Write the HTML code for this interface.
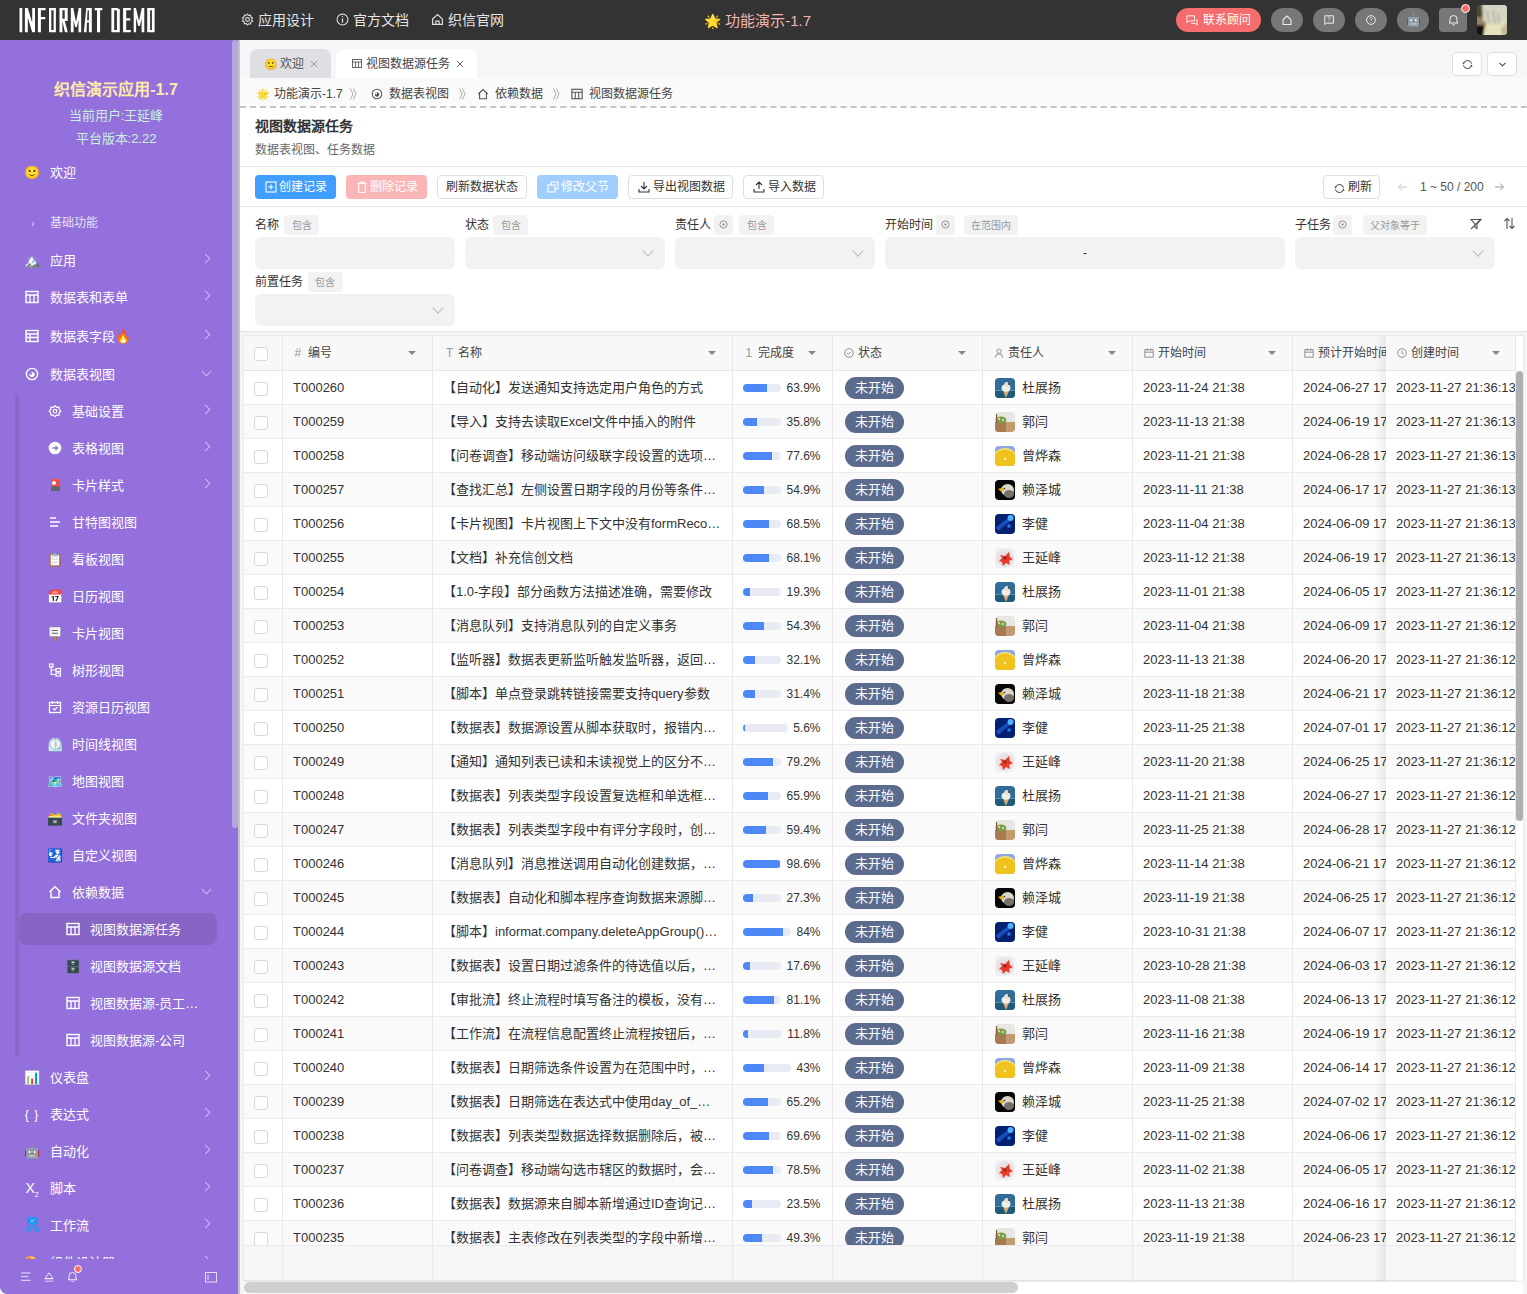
<!DOCTYPE html>
<html lang="zh-CN"><head><meta charset="utf-8"><title>视图数据源任务</title>
<style>
*{box-sizing:border-box}
html,body{margin:0;padding:0;width:1527px;height:1294px;overflow:hidden;background:#f5f5f5;font-family:"Liberation Sans",sans-serif;color:#333}
.abs{position:absolute}
#hdr{position:absolute;left:0;top:0;width:1527px;height:40px;background:#333}
#side{position:absolute;left:0;top:40px;width:238px;height:1254px;background:#9370db;border-bottom-left-radius:8px;overflow:hidden}
#main{position:absolute;left:240px;top:40px;width:1287px;height:1254px;background:#f5f5f5}
.mi{position:absolute;left:0;width:232px;height:37px;color:#fff;font-size:13px}
.mi .ic{position:absolute;top:0;height:37px;line-height:37px;font-size:13px;text-align:center;width:16px}
.mi .tx{position:absolute;top:0;line-height:37px;white-space:nowrap}
.mi .ar{position:absolute;left:202px;top:13px;width:7px;height:7px;border-right:1.3px solid rgba(255,255,255,.55);border-top:1.3px solid rgba(255,255,255,.55);transform:rotate(45deg)}
.mi .ad{position:absolute;left:203px;top:12px;width:7px;height:7px;border-right:1.3px solid rgba(255,255,255,.55);border-bottom:1.3px solid rgba(255,255,255,.55);transform:rotate(45deg)}
.btn{position:absolute;top:175px;height:24px;border-radius:4px;font-size:12px;line-height:22px;white-space:nowrap}
.btn.o{border:1px solid #dcdfe6;background:#fff;color:#333}
.tag{position:absolute;height:19px;background:#f2f2f2;border-radius:4px;font-size:10px;color:#999;line-height:19px;text-align:center}
.lbl{position:absolute;font-size:12px;color:#333;line-height:19px}
.inp{position:absolute;height:32px;background:#f2f2f2;border-radius:6px}
.chev{position:absolute;width:8px;height:8px;border-right:1px solid #bbb;border-bottom:1px solid #bbb;transform:rotate(45deg)}
table{border-collapse:collapse}
.cell{position:absolute;height:34px;line-height:34px;font-size:13px;color:#333;white-space:nowrap;overflow:hidden}
</style></head><body>

<div id="hdr">
<svg class="abs" style="left:0;top:0" width="160" height="40"><path d="M19.5 8H22.3V32.2H19.5Z M24.9 8H27.8V32.2H24.9Z M32.2 8H35.0V32.2H32.2Z M24.9 8 L27.8 8 L35.0 32.2 L32.2 32.2Z M37.9 8H40.9V32.2H37.9Z M37.9 8H45.6V10.3H37.9Z M37.9 17H45.3V19.2H37.9Z M49.0 8H55.9V10.3H49.0Z M49.0 29.900000000000002H55.9V32.2H49.0Z M49.0 8H51.3V32.2H49.0Z M53.6 8H55.9V32.2H53.6Z M59.5 8H62.4V32.2H59.5Z M59.5 8H67.7V10.3H59.5Z M64.7 8H67.7V21H64.7Z M59.5 18.8H67.7V21H59.5Z M62.4 21 L64.8 21 L67.8 32.2 L64.9 32.2Z M70.8 8H73.6V32.2H70.8Z M78.5 8H81.2V32.2H78.5Z M70.8 8 L73.2 8 L76.0 22 L78.8 8 L81.2 8 L76.8 27 L75.2 27Z M83.8 32.2 L86.3 8 L91.8 8 L91.8 32.2 L88.9 32.2 L88.9 10.3 L87.6 10.3 L86.5 32.2Z M86.2 20.3H89V22.6H86.2Z M94.7 8H102.3V10.3H94.7Z M97.0 8H100.1V32.2H97.0Z M111.4 8H114.2V32.2H111.4Z M111.4 8H118.0V10.3H111.4Z M111.4 29.900000000000002H119.8V32.2H111.4Z M116.9 9H119.8V32.2H116.9Z M116.0 8 L118.0 8 L119.8 11 L116.9 11Z M123.1 8H126.2V32.2H123.1Z M123.1 8H130.8V10.3H123.1Z M123.1 18.2H130.3V20.5H123.1Z M123.1 29.900000000000002H130.8V32.2H123.1Z M133.7 8H136.1V32.2H133.7Z M141.6 8H144.3V32.2H141.6Z M133.7 8 L136.0 8 L139.0 21 L141.8 8 L144.3 8 L139.8 26 L138.2 26Z M147.2 8H154.6V10.3H147.2Z M147.2 29.900000000000002H154.6V32.2H147.2Z M147.2 8H150.1V32.2H147.2Z M151.9 8H154.6V32.2H151.9Z" fill="#fff"/></svg>
<div class="abs" style="left:241px;top:0;height:40px;line-height:40px;color:#e6e6e6;font-size:14px;white-space:nowrap">
<svg width="13" height="13" viewBox="0 0 24 24" style="vertical-align:-1px"><path d="M12 2l2.2 2.6 3.4-.5.6 3.4 3 1.7-1.6 3 1.6 3-3 1.7-.6 3.4-3.4-.5L12 22l-2.2-2.6-3.4.5-.6-3.4-3-1.7 1.6-3-1.6-3 3-1.7.6-3.4 3.4.5z" fill="none" stroke="#ddd" stroke-width="2"/><circle cx="12" cy="12" r="3.5" fill="none" stroke="#ddd" stroke-width="2"/></svg> 应用设计</div>
<div class="abs" style="left:336px;top:0;height:40px;line-height:40px;color:#e6e6e6;font-size:14px;white-space:nowrap">
<svg width="13" height="13" viewBox="0 0 24 24" style="vertical-align:-1px"><circle cx="12" cy="12" r="10" fill="none" stroke="#ddd" stroke-width="2"/><path d="M12 10v8M12 6v2" stroke="#ddd" stroke-width="2.4"/></svg> 官方文档</div>
<div class="abs" style="left:431px;top:0;height:40px;line-height:40px;color:#e6e6e6;font-size:14px;white-space:nowrap">
<svg width="13" height="13" viewBox="0 0 24 24" style="vertical-align:-1px"><path d="M3 11L12 3l9 8v10H3z" fill="none" stroke="#ddd" stroke-width="2.2"/><path d="M9 21v-6h6v6" fill="none" stroke="#ddd" stroke-width="2"/></svg> 织信官网</div>
<div class="abs" style="left:704px;top:1px;height:40px;line-height:40px;color:#f4b4b4;font-size:15px;white-space:nowrap"><span style="font-size:14px">🌟</span> 功能演示-1.7</div>
<div class="abs" style="left:1176px;top:8px;width:85px;height:24px;border-radius:12px;background:#f56c6c;color:#fff;font-size:13px;line-height:24px;white-space:nowrap">
<svg class="abs" style="left:10px;top:7px" width="12" height="11" viewBox="0 0 14 13"><path d="M1 1h9v6H4L1 9z" fill="none" stroke="#fff" stroke-width="1.1"/><path d="M6 10h5l2 2V5" fill="none" stroke="#fff" stroke-width="1.1"/></svg>
<span class="abs" style="left:27px;top:0;font-size:12px">联系顾问</span></div>

<div class="abs" style="left:1271px;top:8px;width:32px;height:24px;border-radius:12px;background:#777"><svg class="abs" style="left:11px;top:6.5px" width="10" height="10" viewBox="0 0 10 10"><path d="M1 4.8L5 1l4 3.8V9.5H1z" fill="none" stroke="#eee" stroke-width="1.1" stroke-linejoin="round"/></svg></div>
<div class="abs" style="left:1313px;top:8px;width:32px;height:24px;border-radius:12px;background:#777"><svg class="abs" style="left:11px;top:6.5px" width="10" height="10" viewBox="0 0 10 10"><path d="M0.8 0.8h8.6v7.4H2.4L0.8 9.6z" fill="none" stroke="#eee" stroke-width="1"/><path d="M3.8 3.2a1.2 1.2 0 112 .9c-.6.4-.8.6-.8 1.2M5 6.3v.8" fill="none" stroke="#ddd" stroke-width=".9"/></svg></div>
<div class="abs" style="left:1355px;top:8px;width:32px;height:24px;border-radius:12px;background:#777"><svg class="abs" style="left:11px;top:6.5px" width="10" height="10" viewBox="0 0 10 10"><circle cx="5" cy="5" r="4.4" fill="none" stroke="#eee" stroke-width="1"/><path d="M3.8 3.7a1.2 1.2 0 112 .9c-.6.4-.8.6-.8 1.2M5 6.8v.8" fill="none" stroke="#ddd" stroke-width=".9"/></svg></div>
<div class="abs" style="left:1397px;top:8px;width:32px;height:24px;border-radius:12px;background:#777;text-align:center;line-height:24px;font-size:12px">🤖</div>
<div class="abs" style="left:1439px;top:8px;width:28px;height:24px;border-radius:4px;background:#777"><svg class="abs" style="left:9px;top:6px" width="11" height="12" viewBox="0 0 11 12"><path d="M2 8V5a3.5 3.5 0 017 0v3l1 1H1z" fill="none" stroke="#eee" stroke-width="1"/><path d="M4.3 10.8h2.4" stroke="#eee" stroke-width="1"/></svg></div>
<div class="abs" style="left:1461px;top:4px;width:9px;height:9px;border-radius:50%;background:#f56c6c;border:1px solid #fff"></div>
<svg class="abs" style="left:1477px;top:5px" width="30" height="30" viewBox="0 0 30 30"><defs><clipPath id="avc"><rect width="30" height="30" rx="3.5"/></clipPath><filter id="avb"><feGaussianBlur stdDeviation="1"/></filter></defs><g clip-path="url(#avc)"><rect width="30" height="30" fill="#8a7a58"/><g filter="url(#avb)"><rect x="-2" y="-2" width="8" height="14" fill="#4a4a30"/><rect x="-2" y="12" width="8" height="9" fill="#9a8060"/><rect x="-2" y="20" width="9" height="12" fill="#12100a"/><path d="M5 -2H33V14L22 22 12 20 6 16z" fill="#d6d4c4"/><path d="M9 18L22 20 28 14 32 18V32H6z" fill="#e6e2bc"/><path d="M24 24L32 14V32H26z" fill="#c8b89c"/><path d="M10 6L12 18M16 5L18 19M21 8L22 18" stroke="#9a9c80" stroke-width="1"/></g></g></svg>
</div>

<div id="side">
<div class="abs" style="left:0;top:39px;width:232px;text-align:center;color:#ffeaa7;font-size:16px;font-weight:bold;line-height:22px">织信演示应用-1.7</div>
<div class="abs" style="left:0;top:65px;width:232px;text-align:center;color:#c9f0dc;font-size:13px;line-height:22px">当前用户:王延峰</div>
<div class="abs" style="left:0;top:88px;width:232px;text-align:center;color:#c9f0dc;font-size:13px;line-height:22px">平台版本:2.22</div>

<div class="mi" style="top:114px"><div class="ic" style="left:24px"><span style="font-size:13px">🙂</span></div><div class="tx" style="left:50px">欢迎</div></div>
<div class="mi" style="top:165px"><div class="abs" style="left:31px;top:0;line-height:37px;font-size:11px;color:rgba(255,255,255,.75)">›</div><div class="tx" style="left:50px;color:rgba(255,255,255,.8);font-size:12px">基础功能</div></div>
<div class="mi" style="top:202px"><div class="ic" style="left:24px"><span style="font-size:13px">🏔️</span></div><div class="tx" style="left:50px">应用</div><div class="ar"></div></div>
<div class="mi" style="top:239px"><div class="ic" style="left:24px"><svg width="14" height="14" viewBox="0 0 14 14" style="vertical-align:middle;margin-top:-2px;position:relative;top:-1px"><rect x="1" y="1.5" width="12" height="11" fill="none" stroke="#fff" stroke-width="1.4"/><path d="M1 5h12M5 5v7.5M9 5v7.5" stroke="#fff" stroke-width="1.3"/></svg></div><div class="tx" style="left:50px">数据表和表单</div><div class="ar"></div></div>
<div class="mi" style="top:278px"><div class="ic" style="left:24px"><svg width="14" height="14" viewBox="0 0 14 14" style="vertical-align:middle;margin-top:-2px;position:relative;top:-1px"><rect x="1" y="1.5" width="12" height="11" fill="none" stroke="#fff" stroke-width="1.4"/><path d="M1 5h12M1 8.5h12M5 5v7.5" stroke="#fff" stroke-width="1.3"/></svg></div><div class="tx" style="left:50px">数据表字段<span style="font-size:13px">🔥</span></div><div class="ar"></div></div>
<div class="mi" style="top:316px"><div class="ic" style="left:24px"><svg width="14" height="14" viewBox="0 0 14 14" style="vertical-align:middle;margin-top:-2px;position:relative;top:-1px"><circle cx="7" cy="7" r="5.6" fill="none" stroke="#fff" stroke-width="1.4"/><circle cx="7" cy="7.6" r="2.6" fill="#fff"/><circle cx="6" cy="6.4" r="1.2" fill="#9370db"/></svg></div><div class="tx" style="left:50px">数据表视图</div><div class="ad"></div></div>
<div class="abs" style="left:15px;top:355px;width:4px;height:661px;background:#8a66c8"></div>
<div class="mi" style="top:353px"><div class="ic" style="left:47px"><svg width="14" height="14" viewBox="0 0 14 14" style="vertical-align:middle;margin-top:-2px;position:relative;top:-1px"><path d="M7 0.8l1.7 1.6 2.3-.2.2 2.3 1.6 1.7-1.6 1.7-.2 2.3-2.3-.2L7 11.6 5.3 10l-2.3.2-.2-2.3L1.2 6.2l1.6-1.7.2-2.3 2.3.2z" transform="translate(0,1)" fill="none" stroke="#fff" stroke-width="1.2"/><circle cx="7" cy="7.2" r="1.8" fill="none" stroke="#fff" stroke-width="1.2"/></svg></div><div class="tx" style="left:72px">基础设置</div><div class="ar"></div></div>
<div class="mi" style="top:390px"><div class="ic" style="left:47px"><svg width="14" height="14" viewBox="0 0 14 14" style="vertical-align:middle;margin-top:-2px;position:relative;top:-1px"><circle cx="7" cy="7" r="6.3" fill="#fff"/><path d="M4.5 7h5M7.5 5l2 2-2 2" fill="none" stroke="#9370db" stroke-width="1.3"/></svg></div><div class="tx" style="left:72px">表格视图</div><div class="ar"></div></div>
<div class="mi" style="top:427px"><div class="ic" style="left:47px"><svg width="14" height="14" viewBox="0 0 14 14" style="vertical-align:middle;margin-top:-2px;position:relative;top:-1px"><rect x="3" y="1" width="9" height="12" fill="#ef4f45"/><path d="M3 9.5q4.5-3 9 0V13H3z" fill="#5e6670"/><circle cx="6" cy="5" r="2" fill="#fff"/></svg></div><div class="tx" style="left:72px">卡片样式</div><div class="ar"></div></div>
<div class="mi" style="top:464px"><div class="ic" style="left:47px"><svg width="14" height="14" viewBox="0 0 14 14" style="vertical-align:middle;margin-top:-2px;position:relative;top:-1px"><path d="M2 3h6M2 7h10M2 11h8" stroke="#fff" stroke-width="1.4"/></svg></div><div class="tx" style="left:72px">甘特图视图</div></div>
<div class="mi" style="top:501px"><div class="ic" style="left:47px"><span style="font-size:13px">📋</span></div><div class="tx" style="left:72px">看板视图</div></div>
<div class="mi" style="top:538px"><div class="ic" style="left:47px"><span style="font-size:13px">📅</span></div><div class="tx" style="left:72px">日历视图</div></div>
<div class="mi" style="top:575px"><div class="ic" style="left:47px"><span style="font-size:13px">🪧</span></div><div class="tx" style="left:72px">卡片视图</div></div>
<div class="mi" style="top:612px"><div class="ic" style="left:47px"><svg width="14" height="14" viewBox="0 0 14 14" style="vertical-align:middle;margin-top:-2px;position:relative;top:-1px"><rect x="1.5" y="1" width="3.5" height="3" fill="none" stroke="#fff" stroke-width="1.2"/><rect x="8" y="5.5" width="4.5" height="3" fill="none" stroke="#fff" stroke-width="1.2"/><rect x="8" y="10" width="4.5" height="3" fill="none" stroke="#fff" stroke-width="1.2"/><path d="M3.2 4v7.5H8M3.2 7H8" fill="none" stroke="#fff" stroke-width="1.2"/></svg></div><div class="tx" style="left:72px">树形视图</div></div>
<div class="mi" style="top:649px"><div class="ic" style="left:47px"><svg width="14" height="14" viewBox="0 0 14 14" style="vertical-align:middle;margin-top:-2px;position:relative;top:-1px"><rect x="1.5" y="2.5" width="11" height="10" fill="none" stroke="#fff" stroke-width="1.3"/><path d="M1.5 5.5h11M4.5 1v3M9.5 1v3M5 8.5l1.6 1.5 2.8-2.8" fill="none" stroke="#fff" stroke-width="1.2"/></svg></div><div class="tx" style="left:72px">资源日历视图</div></div>
<div class="mi" style="top:686px"><div class="ic" style="left:47px"><span style="font-size:13px">⏲️</span></div><div class="tx" style="left:72px">时间线视图</div></div>
<div class="mi" style="top:723px"><div class="ic" style="left:47px"><span style="font-size:13px">🗺️</span></div><div class="tx" style="left:72px">地图视图</div></div>
<div class="mi" style="top:760px"><div class="ic" style="left:47px"><span style="font-size:13px">🗃️</span></div><div class="tx" style="left:72px">文件夹视图</div></div>
<div class="mi" style="top:797px"><div class="ic" style="left:47px"><span style="font-size:13px">🛂</span></div><div class="tx" style="left:72px">自定义视图</div></div>
<div class="mi" style="top:834px"><div class="ic" style="left:47px"><svg width="14" height="14" viewBox="0 0 14 14" style="vertical-align:middle;margin-top:-2px;position:relative;top:-1px"><path d="M1.5 7L7 1.8 12.5 7M3 5.8v6.7h8V5.8" fill="none" stroke="#fff" stroke-width="1.4"/></svg></div><div class="tx" style="left:72px">依赖数据</div><div class="ad"></div></div>
<div class="mi" style="top:871px"><div class="abs" style="left:19px;top:2px;width:198px;height:32px;border-radius:8px;background:#8765c4"></div><div class="ic" style="left:65px"><svg width="14" height="14" viewBox="0 0 14 14" style="vertical-align:middle;margin-top:-2px;position:relative;top:-1px"><rect x="1" y="1.5" width="12" height="11" fill="none" stroke="#fff" stroke-width="1.4"/><path d="M1 5h12M5 5v7.5M9 5v7.5" stroke="#fff" stroke-width="1.3"/></svg></div><div class="tx" style="left:90px">视图数据源任务</div></div>
<div class="mi" style="top:908px"><div class="ic" style="left:65px"><span style="font-size:13px">🗄️</span></div><div class="tx" style="left:90px">视图数据源文档</div></div>
<div class="mi" style="top:945px"><div class="ic" style="left:65px"><svg width="14" height="14" viewBox="0 0 14 14" style="vertical-align:middle;margin-top:-2px;position:relative;top:-1px"><rect x="1" y="1.5" width="12" height="11" fill="none" stroke="#fff" stroke-width="1.4"/><path d="M1 5h12M5 5v7.5M9 5v7.5" stroke="#fff" stroke-width="1.3"/></svg></div><div class="tx" style="left:90px">视图数据源-员工…</div></div>
<div class="mi" style="top:982px"><div class="ic" style="left:65px"><svg width="14" height="14" viewBox="0 0 14 14" style="vertical-align:middle;margin-top:-2px;position:relative;top:-1px"><rect x="1" y="1.5" width="12" height="11" fill="none" stroke="#fff" stroke-width="1.4"/><path d="M1 5h12M5 5v7.5M9 5v7.5" stroke="#fff" stroke-width="1.3"/></svg></div><div class="tx" style="left:90px">视图数据源-公司</div></div>
<div class="mi" style="top:1019px"><div class="ic" style="left:24px"><span style="font-size:13px">📊</span></div><div class="tx" style="left:50px">仪表盘</div><div class="ar"></div></div>
<div class="mi" style="top:1056px"><div class="ic" style="left:24px"><span style="font-size:12px;color:#fff;letter-spacing:1px">{ }</span></div><div class="tx" style="left:50px">表达式</div><div class="ar"></div></div>
<div class="mi" style="top:1093px"><div class="ic" style="left:24px"><span style="font-size:13px">🤖</span></div><div class="tx" style="left:50px">自动化</div><div class="ar"></div></div>
<div class="mi" style="top:1130px"><div class="ic" style="left:24px"><span style="font-size:14px;color:#fff">X<sub style="font-size:7px">2</sub></span></div><div class="tx" style="left:50px">脚本</div><div class="ar"></div></div>
<div class="mi" style="top:1167px"><div class="ic" style="left:24px"><svg width="15" height="15" viewBox="0 0 14 14" style="vertical-align:middle;margin-top:-2px;position:relative;top:-1px"><rect x="2" y="0" width="10" height="7" rx="0.8" fill="#2196f3"/><path d="M5.5 3.2l1.2 1 1.8-1.8" fill="none" stroke="#fff" stroke-width=".8"/><path d="M7 7v2M3 10V9h8v1" fill="none" stroke="#2196f3" stroke-width="1"/><circle cx="3" cy="11.8" r="1.9" fill="none" stroke="#2196f3" stroke-width="1.1"/><circle cx="11" cy="11.8" r="1.9" fill="none" stroke="#2196f3" stroke-width="1.1"/></svg></div><div class="tx" style="left:50px">工作流</div><div class="ar"></div></div>
<div class="mi" style="top:1204px"><div class="ic" style="left:24px"><span style="font-size:13px">🎨</span></div><div class="tx" style="left:50px">组件设计器</div><div class="ar"></div></div>
<div class="abs" style="left:0;top:1219px;width:232px;height:35px;background:#9370db"></div>
<svg class="abs" style="left:21px;top:1272px;margin-top:-40px" width="10" height="10" viewBox="0 0 10 10"><path d="M0 1h9.5M0 4.6h7.5M0 8.3h9.5" stroke="rgba(255,255,255,.8)" stroke-width="1"/></svg>
<svg class="abs" style="left:44px;top:1272px;margin-top:-40px" width="10" height="10" viewBox="0 0 10 10"><path d="M5 0.8L9 6.5H1z" fill="none" stroke="rgba(255,255,255,.85)" stroke-width="1"/><path d="M0.5 8h9M0.5 9.5h9" stroke="rgba(255,255,255,.55)" stroke-width=".8"/></svg>
<svg class="abs" style="left:67px;top:1271px;margin-top:-40px" width="11" height="11" viewBox="0 0 11 11"><path d="M2 8V5a3.5 3.5 0 017 0v3l1 .8H1z" fill="none" stroke="rgba(255,255,255,.85)" stroke-width="1"/><path d="M4.3 10.5h2.4" stroke="rgba(255,255,255,.7)" stroke-width="1"/></svg>
<div class="abs" style="left:74px;top:1225px;width:8px;height:8px;border-radius:50%;background:#f56c6c;border:1px solid #fff"></div>
<svg class="abs" style="left:205px;top:1272px;margin-top:-40px" width="12" height="11" viewBox="0 0 12 11"><rect x="0.5" y="0.5" width="11" height="9.5" fill="none" stroke="rgba(255,255,255,.75)" stroke-width="1"/><path d="M3 2.5v5.5" stroke="rgba(255,255,255,.75)" stroke-width="1"/></svg>

<div class="abs" style="left:232px;top:0;width:6px;height:788px;border-radius:3px;background:#b4a5e0"></div>
</div>
<div class="abs" style="left:238px;top:40px;width:2px;height:1254px;background:#c4c4c4"></div>
<div class="abs" style="left:240px;top:40px;width:1287px;height:38px;background:#f5f6f8"></div>
<div class="abs" style="left:250px;top:49px;width:81px;height:29px;background:#dedfe2;border-radius:8px 8px 0 0;font-size:12px;color:#555;line-height:31px;white-space:nowrap">
<span class="abs" style="left:14px;top:0;font-size:11px">🙂</span><span class="abs" style="left:30px;top:0">欢迎</span><svg class="abs" style="left:60px;top:11px" width="8" height="8" viewBox="0 0 8 8"><path d="M1 1l6 6M7 1L1 7" stroke="#999" stroke-width="1"/></svg></div>
<div class="abs" style="left:336px;top:49px;width:141px;height:29px;background:#fff;border-radius:8px 8px 0 0;font-size:12px;color:#444;line-height:31px;white-space:nowrap">
<svg class="abs" style="left:16px;top:10px" width="10" height="9" viewBox="0 0 10 9"><rect x="0.5" y="0.5" width="9" height="8" fill="none" stroke="#666" stroke-width="1"/><path d="M0.5 3h9M3.5 3v5.5M6.5 3v5.5" stroke="#666" stroke-width="1"/></svg>
<span class="abs" style="left:30px;top:0">视图数据源任务</span><svg class="abs" style="left:120px;top:11px" width="8" height="8" viewBox="0 0 8 8"><path d="M1 1l6 6M7 1L1 7" stroke="#666" stroke-width="1"/></svg></div>
<div class="abs" style="left:1452px;top:52px;width:30px;height:24px;border:1px solid #dcdfe6;border-radius:5px;background:#fff"><svg class="abs" style="left:9px;top:6px" width="11" height="11" viewBox="0 0 11 11"><path d="M1.6 4.2A4.2 4.2 0 0 1 9.6 4.7M9.4 6.9A4.2 4.2 0 0 1 1.4 6.3" fill="none" stroke="#444" stroke-width="1"/><path d="M0.4 3.4L3 3.6 1.5 5.6zM10.6 7.6L8 7.4 9.5 5.4z" fill="#444"/></svg></div>
<div class="abs" style="left:1487px;top:52px;width:30px;height:24px;border:1px solid #dcdfe6;border-radius:5px;background:#fff"><svg class="abs" style="left:11px;top:9px" width="7" height="5" viewBox="0 0 7 5"><path d="M0.5 0.8L3.5 3.8 6.5 0.8" fill="none" stroke="#444" stroke-width="1.1"/></svg></div>

<div class="abs" style="left:240px;top:78px;width:1287px;height:30px;background:#fafafa;border-bottom:2px dashed #c8c4c4"></div>
<div class="abs" style="left:256px;top:79.5px;height:28px;line-height:28px;font-size:12px;color:#444;white-space:nowrap">
<span class="abs" style="left:0;top:0;font-size:11px">🌟</span><span class="abs" style="left:18px;top:0">功能演示-1.7</span><svg class="abs" style="left:93px;top:8px" width="9" height="12" viewBox="0 0 9 12"><path d="M1.5 0.5l2.5 5.5-2.5 5.5M4.5 0.5l2.5 5.5-2.5 5.5" fill="none" stroke="#aaa" stroke-width="1"/></svg>
<svg class="abs" style="left:115px;top:8px" width="12" height="12" viewBox="0 0 14 14"><circle cx="7" cy="7" r="5.6" fill="none" stroke="#555" stroke-width="1.3"/><circle cx="7" cy="7.6" r="2.6" fill="#555"/><circle cx="6" cy="6.4" r="1.1" fill="#fafafa"/></svg>
<span class="abs" style="left:133px;top:0">数据表视图</span><svg class="abs" style="left:202px;top:8px" width="9" height="12" viewBox="0 0 9 12"><path d="M1.5 0.5l2.5 5.5-2.5 5.5M4.5 0.5l2.5 5.5-2.5 5.5" fill="none" stroke="#aaa" stroke-width="1"/></svg>
<svg class="abs" style="left:221px;top:8px" width="12" height="12" viewBox="0 0 14 14"><path d="M1.5 7L7 1.8 12.5 7M3 5.8v6.7h8V5.8" fill="none" stroke="#555" stroke-width="1.3"/></svg>
<span class="abs" style="left:239px;top:0">依赖数据</span><svg class="abs" style="left:296px;top:8px" width="9" height="12" viewBox="0 0 9 12"><path d="M1.5 0.5l2.5 5.5-2.5 5.5M4.5 0.5l2.5 5.5-2.5 5.5" fill="none" stroke="#aaa" stroke-width="1"/></svg>
<svg class="abs" style="left:315px;top:8px" width="12" height="12" viewBox="0 0 14 14"><rect x="1" y="1.5" width="12" height="11" fill="none" stroke="#555" stroke-width="1.3"/><path d="M1 5h12M5 5v7.5M9 5v7.5" stroke="#555" stroke-width="1.2"/></svg>
<span class="abs" style="left:333px;top:0">视图数据源任务</span></div>

<div class="abs" style="left:240px;top:108px;width:1287px;height:59px;background:#fff;border-bottom:1px solid #e4e4e4"></div>
<div class="abs" style="left:255px;top:116px;font-size:14px;font-weight:bold;color:#333;line-height:20px">视图数据源任务</div>
<div class="abs" style="left:255px;top:141px;font-size:12px;color:#666;line-height:18px">数据表视图、任务数据</div>

<div class="abs" style="left:240px;top:167px;width:1287px;height:40px;background:#fff;border-bottom:1px solid #e4e4e4"></div>
<div class="btn" style="left:255px;width:81px;background:#409eff;color:#fff;line-height:24px"><svg class="abs" style="left:10px;top:6px" width="12" height="12" viewBox="0 0 12 12"><rect x="1" y="1" width="10" height="10" fill="none" stroke="#fff" stroke-width="1.1"/><path d="M6 3.5v5M3.5 6h5" stroke="#fff" stroke-width="1.1"/></svg><span class="abs" style="left:24px;top:0">创建记录</span></div>
<div class="btn" style="left:346px;width:81px;background:#fab6b6;color:#fff;line-height:24px"><svg class="abs" style="left:10px;top:6px" width="12" height="12" viewBox="0 0 12 12"><path d="M1.5 2.5h9M4 2.5V1h4v1.5M2.5 2.5l.5 9h6l.5-9" fill="none" stroke="#fff" stroke-width="1.1"/></svg><span class="abs" style="left:24px;top:0">删除记录</span></div>
<div class="btn o" style="left:437px;width:90px"><span class="abs" style="left:8px;top:0">刷新数据状态</span></div>
<div class="btn" style="left:537px;width:81px;background:#a0cfff;color:#fff;line-height:24px"><svg class="abs" style="left:10px;top:6px" width="12" height="12" viewBox="0 0 12 12"><rect x="1" y="4" width="7" height="7" fill="none" stroke="#fff" stroke-width="1.1"/><path d="M4 4V1h7v7H8" fill="none" stroke="#fff" stroke-width="1.1"/></svg><span class="abs" style="left:24px;top:0">修改父节</span></div>
<div class="btn o" style="left:628px;width:105px"><svg class="abs" style="left:9px;top:5px" width="12" height="12" viewBox="0 0 12 12"><path d="M6 1v7M3 5l3 3 3-3M1 8v3h10V8" fill="none" stroke="#333" stroke-width="1.1"/></svg><span class="abs" style="left:24px;top:0">导出视图数据</span></div>
<div class="btn o" style="left:743px;width:81px"><svg class="abs" style="left:9px;top:5px" width="12" height="12" viewBox="0 0 12 12"><path d="M6 8V1M3 4l3-3 3 3M1 8v3h10V8" fill="none" stroke="#333" stroke-width="1.1"/></svg><span class="abs" style="left:24px;top:0">导入数据</span></div>
<div class="btn o" style="left:1323px;width:57px"><svg class="abs" style="left:10px;top:6.5px" width="11" height="11" viewBox="0 0 11 11"><path d="M1.6 4.2A4.2 4.2 0 0 1 9.6 4.7M9.4 6.9A4.2 4.2 0 0 1 1.4 6.3" fill="none" stroke="#444" stroke-width="1"/><path d="M0.4 3.4L3 3.6 1.5 5.6zM10.6 7.6L8 7.4 9.5 5.4z" fill="#444"/></svg><span class="abs" style="left:23.5px;top:0">刷新</span></div>
<svg class="abs" style="left:1397px;top:182px" width="11" height="10" viewBox="0 0 11 10"><path d="M10 5H1.5M5 1.5L1.5 5 5 8.5" fill="none" stroke="#c4c4c4" stroke-width="1"/></svg>
<div class="abs" style="left:1420px;top:175px;line-height:24px;font-size:12px;color:#555;white-space:nowrap">1 ~ 50 / 200</div>
<svg class="abs" style="left:1494px;top:182px" width="11" height="10" viewBox="0 0 11 10"><path d="M1 5h8.5M6 1.5L9.5 5 6 8.5" fill="none" stroke="#999" stroke-width="1"/></svg>

<div class="abs" style="left:240px;top:207px;width:1287px;height:125px;background:#fff;border-bottom:1px solid #e4e4e4"></div>
<div class="lbl" style="left:255px;top:216px">名称</div>
<div class="tag" style="left:284px;top:214.5px;width:35px;height:20px;line-height:21px">包含</div>
<div class="inp" style="left:255px;top:237px;width:200px"></div>
<div class="lbl" style="left:465px;top:216px">状态</div>
<div class="tag" style="left:493px;top:214.5px;width:35px;height:20px;line-height:21px">包含</div>
<div class="inp" style="left:465px;top:237px;width:200px"></div>
<div class="chev" style="left:644px;top:246.5px"></div>
<div class="lbl" style="left:675px;top:216px">责任人</div>
<div class="tag" style="left:714px;top:214.5px;width:19px;height:20px"><svg style="margin-top:5.5px" width="9" height="9" viewBox="0 0 10 10"><circle cx="5" cy="5" r="4" fill="none" stroke="#888" stroke-width="1"/><circle cx="5" cy="5" r="1.3" fill="#999"/></svg></div>
<div class="tag" style="left:739px;top:214.5px;width:35px;height:20px;line-height:21px">包含</div>
<div class="inp" style="left:675px;top:237px;width:200px"></div>
<div class="chev" style="left:854px;top:246.5px"></div>
<div class="lbl" style="left:885px;top:216px">开始时间</div>
<div class="tag" style="left:935.5px;top:214.5px;width:19px;height:20px"><svg style="margin-top:5.5px" width="9" height="9" viewBox="0 0 10 10"><circle cx="5" cy="5" r="4" fill="none" stroke="#888" stroke-width="1"/><circle cx="5" cy="5" r="1.3" fill="#999"/></svg></div>
<div class="tag" style="left:964px;top:214.5px;width:54px;height:20px;line-height:21px">在范围内</div>
<div class="inp" style="left:885px;top:237px;width:400px"></div>
<div class="abs" style="left:885px;top:237px;width:400px;line-height:32px;text-align:center;font-size:12px;color:#333">-</div>
<div class="lbl" style="left:1295px;top:216px">子任务</div>
<div class="tag" style="left:1333px;top:214.5px;width:19px;height:20px"><svg style="margin-top:5.5px" width="9" height="9" viewBox="0 0 10 10"><circle cx="5" cy="5" r="4" fill="none" stroke="#888" stroke-width="1"/><circle cx="5" cy="5" r="1.3" fill="#999"/></svg></div>
<div class="tag" style="left:1363px;top:214.5px;width:64px;height:20px;line-height:21px">父对象等于</div>
<div class="inp" style="left:1295px;top:237px;width:200px"></div>
<div class="chev" style="left:1474px;top:246.5px"></div>
<div class="lbl" style="left:255px;top:273px">前置任务</div>
<div class="tag" style="left:307.5px;top:271.5px;width:35.5px;height:20px;line-height:21px">包含</div>
<div class="inp" style="left:255px;top:294px;width:200px"></div>
<div class="chev" style="left:434px;top:303.5px"></div>
<svg class="abs" style="left:1470px;top:218px" width="12" height="12" viewBox="0 0 12 12"><path d="M1 1.5h10L7 6v4.5L5 9.5V6z" fill="none" stroke="#555" stroke-width="1.1"/><path d="M1 11L11 1" stroke="#555" stroke-width="1.1"/></svg>
<svg class="abs" style="left:1503px;top:217px" width="13" height="13" viewBox="0 0 13 13"><path d="M4 12V1.5M1.5 4L4 1.5 6.5 4M9 1v10.5M6.5 9L9 11.5 11.5 9" fill="none" stroke="#555" stroke-width="1.1"/></svg>

<div class="abs" style="left:243px;top:335px;width:1281px;height:947px;background:#fff;border:1px solid #e8e8ee"></div>
<div class="abs" style="left:244px;top:336px;width:1272px;height:35px;background:#f8f8f8;border-bottom:1px solid #e6e6e8"></div>
<div class="abs" style="left:244px;top:371px;width:1272px;height:874px;overflow:hidden">
<div class="abs" style="left:0;top:0px;width:1272px;height:34px;background:#fff;border-bottom:1px solid #eaeaec"></div>
<div class="abs" style="left:10px;top:11px;width:14px;height:14px;border:1px solid #d6d9e4;border-radius:3px;background:#fff"></div>
<div class="cell" style="left:49px;top:0px">T000260</div>
<div class="cell" style="left:199px;top:0px;width:285px;text-overflow:ellipsis">【自动化】发送通知支持选定用户角色的方式</div>
<div class="abs" style="left:499px;top:0px;width:77.5px;height:34px;display:flex;align-items:center"><div style="flex:1;height:8px;border-radius:4px;background:#e8ebf3;overflow:hidden"><div style="width:63.9%;height:8px;background:#4e87f6"></div></div><div style="font-size:12px;color:#333;margin-left:5.5px;white-space:nowrap">63.9%</div></div>
<div class="abs" style="left:601px;top:6px;width:59px;height:22px;border-radius:11px;background:#5b6b8d;color:#fff;font-size:13px;line-height:22px;text-align:center">未开始</div>
<svg class="abs" style="left:751px;top:7px" width="20" height="20" viewBox="0 0 20 20"><defs><clipPath id="ac0"><rect width="20" height="20" rx="4"/></clipPath></defs><g clip-path="url(#ac0)"><rect width="20" height="20" fill="#2f6d9c"/><rect y="13" width="20" height="7" fill="#1f5a78"/><rect y="12" width="20" height="1" fill="#5a90b0"/><path d="M8 13l3 7 3-7z" fill="#d8a878"/><ellipse cx="11" cy="10" rx="4.5" ry="3.8" fill="#f2eee8"/><ellipse cx="12" cy="6.5" rx="2.8" ry="2.6" fill="#e8e0d8"/><ellipse cx="14" cy="5.5" rx="1.2" ry="1.5" fill="#6a4a3a"/></g></svg>
<div class="cell" style="left:778px;top:0px">杜展扬</div>
<div class="cell" style="left:899px;top:0px">2023-11-24 21:38</div>
<div class="cell" style="left:1059px;top:0px;width:90px">2024-06-27 17</div>
<div class="abs" style="left:0;top:34px;width:1272px;height:34px;background:#fafafa;border-bottom:1px solid #eaeaec"></div>
<div class="abs" style="left:10px;top:45px;width:14px;height:14px;border:1px solid #d6d9e4;border-radius:3px;background:#fff"></div>
<div class="cell" style="left:49px;top:34px">T000259</div>
<div class="cell" style="left:199px;top:34px;width:285px;text-overflow:ellipsis">【导入】支持去读取Excel文件中插入的附件</div>
<div class="abs" style="left:499px;top:34px;width:77.5px;height:34px;display:flex;align-items:center"><div style="flex:1;height:8px;border-radius:4px;background:#e8ebf3;overflow:hidden"><div style="width:35.8%;height:8px;background:#4e87f6"></div></div><div style="font-size:12px;color:#333;margin-left:5.5px;white-space:nowrap">35.8%</div></div>
<div class="abs" style="left:601px;top:40px;width:59px;height:22px;border-radius:11px;background:#5b6b8d;color:#fff;font-size:13px;line-height:22px;text-align:center">未开始</div>
<svg class="abs" style="left:751px;top:41px" width="20" height="20" viewBox="0 0 20 20"><defs><clipPath id="ac1"><rect width="20" height="20" rx="4"/></clipPath></defs><g clip-path="url(#ac1)"><rect width="20" height="20" fill="#e6e6e4"/><rect y="10" width="20" height="10" fill="#c49a70"/><rect y="10" width="11" height="10" fill="#a87a50"/><ellipse cx="6" cy="8" rx="5.5" ry="3.5" fill="#7a9a48"/><circle cx="4" cy="7" r="1.3" fill="#d8d0a0"/><circle cx="8" cy="8" r="1.2" fill="#c8d8a0"/><rect x="1" y="2" width="1.2" height="9" fill="#8a6038"/></g></svg>
<div class="cell" style="left:778px;top:34px">郭闫</div>
<div class="cell" style="left:899px;top:34px">2023-11-13 21:38</div>
<div class="cell" style="left:1059px;top:34px;width:90px">2024-06-19 17</div>
<div class="abs" style="left:0;top:68px;width:1272px;height:34px;background:#fff;border-bottom:1px solid #eaeaec"></div>
<div class="abs" style="left:10px;top:79px;width:14px;height:14px;border:1px solid #d6d9e4;border-radius:3px;background:#fff"></div>
<div class="cell" style="left:49px;top:68px">T000258</div>
<div class="cell" style="left:199px;top:68px;width:285px;text-overflow:ellipsis">【问卷调查】移动端访问级联字段设置的选项…</div>
<div class="abs" style="left:499px;top:68px;width:77.5px;height:34px;display:flex;align-items:center"><div style="flex:1;height:8px;border-radius:4px;background:#e8ebf3;overflow:hidden"><div style="width:77.6%;height:8px;background:#4e87f6"></div></div><div style="font-size:12px;color:#333;margin-left:5.5px;white-space:nowrap">77.6%</div></div>
<div class="abs" style="left:601px;top:74px;width:59px;height:22px;border-radius:11px;background:#5b6b8d;color:#fff;font-size:13px;line-height:22px;text-align:center">未开始</div>
<svg class="abs" style="left:751px;top:75px" width="20" height="20" viewBox="0 0 20 20"><defs><clipPath id="ac2"><rect width="20" height="20" rx="4"/></clipPath></defs><g clip-path="url(#ac2)"><rect width="20" height="20" fill="#8ea6e2"/><circle cx="10" cy="15" r="13" fill="#f5e27a"/><circle cx="10" cy="15.5" r="12" fill="#efc21e"/><circle cx="10" cy="13" r="1.2" fill="#f8f0c0"/></g></svg>
<div class="cell" style="left:778px;top:68px">曾烨森</div>
<div class="cell" style="left:899px;top:68px">2023-11-21 21:38</div>
<div class="cell" style="left:1059px;top:68px;width:90px">2024-06-28 17</div>
<div class="abs" style="left:0;top:102px;width:1272px;height:34px;background:#fafafa;border-bottom:1px solid #eaeaec"></div>
<div class="abs" style="left:10px;top:113px;width:14px;height:14px;border:1px solid #d6d9e4;border-radius:3px;background:#fff"></div>
<div class="cell" style="left:49px;top:102px">T000257</div>
<div class="cell" style="left:199px;top:102px;width:285px;text-overflow:ellipsis">【查找汇总】左侧设置日期字段的月份等条件…</div>
<div class="abs" style="left:499px;top:102px;width:77.5px;height:34px;display:flex;align-items:center"><div style="flex:1;height:8px;border-radius:4px;background:#e8ebf3;overflow:hidden"><div style="width:54.9%;height:8px;background:#4e87f6"></div></div><div style="font-size:12px;color:#333;margin-left:5.5px;white-space:nowrap">54.9%</div></div>
<div class="abs" style="left:601px;top:108px;width:59px;height:22px;border-radius:11px;background:#5b6b8d;color:#fff;font-size:13px;line-height:22px;text-align:center">未开始</div>
<svg class="abs" style="left:751px;top:109px" width="20" height="20" viewBox="0 0 20 20"><defs><clipPath id="ac3"><rect width="20" height="20" rx="4"/></clipPath></defs><g clip-path="url(#ac3)"><rect width="20" height="20" fill="#060606"/><ellipse cx="12.5" cy="10" rx="6.5" ry="6" fill="#ddd6cc"/><ellipse cx="14" cy="14" rx="5" ry="4" fill="#7a7068"/><path d="M3 9l5-1.5 1 3-3 1z" fill="#e8b020"/><circle cx="9.5" cy="8.5" r=".8" fill="#222"/></g></svg>
<div class="cell" style="left:778px;top:102px">赖泽城</div>
<div class="cell" style="left:899px;top:102px">2023-11-11 21:38</div>
<div class="cell" style="left:1059px;top:102px;width:90px">2024-06-17 17</div>
<div class="abs" style="left:0;top:136px;width:1272px;height:34px;background:#fff;border-bottom:1px solid #eaeaec"></div>
<div class="abs" style="left:10px;top:147px;width:14px;height:14px;border:1px solid #d6d9e4;border-radius:3px;background:#fff"></div>
<div class="cell" style="left:49px;top:136px">T000256</div>
<div class="cell" style="left:199px;top:136px;width:285px;text-overflow:ellipsis">【卡片视图】卡片视图上下文中没有formReco…</div>
<div class="abs" style="left:499px;top:136px;width:77.5px;height:34px;display:flex;align-items:center"><div style="flex:1;height:8px;border-radius:4px;background:#e8ebf3;overflow:hidden"><div style="width:68.5%;height:8px;background:#4e87f6"></div></div><div style="font-size:12px;color:#333;margin-left:5.5px;white-space:nowrap">68.5%</div></div>
<div class="abs" style="left:601px;top:142px;width:59px;height:22px;border-radius:11px;background:#5b6b8d;color:#fff;font-size:13px;line-height:22px;text-align:center">未开始</div>
<svg class="abs" style="left:751px;top:143px" width="20" height="20" viewBox="0 0 20 20"><defs><clipPath id="ac4"><rect width="20" height="20" rx="4"/></clipPath></defs><g clip-path="url(#ac4)"><rect width="20" height="20" fill="#062070"/><path d="M2 15L16 4" stroke="#1a5ad8" stroke-width="4" opacity=".8"/><circle cx="15.5" cy="4" r="3" fill="#4ab0ff"/><circle cx="14" cy="12" r="1.8" fill="#2a7af0"/><circle cx="4" cy="14" r="2" fill="#1a50c0"/></g></svg>
<div class="cell" style="left:778px;top:136px">李健</div>
<div class="cell" style="left:899px;top:136px">2023-11-04 21:38</div>
<div class="cell" style="left:1059px;top:136px;width:90px">2024-06-09 17</div>
<div class="abs" style="left:0;top:170px;width:1272px;height:34px;background:#fafafa;border-bottom:1px solid #eaeaec"></div>
<div class="abs" style="left:10px;top:181px;width:14px;height:14px;border:1px solid #d6d9e4;border-radius:3px;background:#fff"></div>
<div class="cell" style="left:49px;top:170px">T000255</div>
<div class="cell" style="left:199px;top:170px;width:285px;text-overflow:ellipsis">【文档】补充信创文档</div>
<div class="abs" style="left:499px;top:170px;width:77.5px;height:34px;display:flex;align-items:center"><div style="flex:1;height:8px;border-radius:4px;background:#e8ebf3;overflow:hidden"><div style="width:68.1%;height:8px;background:#4e87f6"></div></div><div style="font-size:12px;color:#333;margin-left:5.5px;white-space:nowrap">68.1%</div></div>
<div class="abs" style="left:601px;top:176px;width:59px;height:22px;border-radius:11px;background:#5b6b8d;color:#fff;font-size:13px;line-height:22px;text-align:center">未开始</div>
<svg class="abs" style="left:751px;top:177px" width="20" height="20" viewBox="0 0 20 20"><defs><clipPath id="ac5"><rect width="20" height="20" rx="4"/></clipPath></defs><g clip-path="url(#ac5)"><rect width="20" height="20" fill="#f2f0f2"/><circle cx="10" cy="10" r="9" fill="#e6e2e6"/><path d="M5 7l5 1 4-4 1 5 3 2-4 2 1 4-4-2-3 3-1-4-3-1 3-3z" fill="#e83a2a"/><circle cx="10" cy="10" r="1.5" fill="#8a2a1a"/></g></svg>
<div class="cell" style="left:778px;top:170px">王延峰</div>
<div class="cell" style="left:899px;top:170px">2023-11-12 21:38</div>
<div class="cell" style="left:1059px;top:170px;width:90px">2024-06-19 17</div>
<div class="abs" style="left:0;top:204px;width:1272px;height:34px;background:#fff;border-bottom:1px solid #eaeaec"></div>
<div class="abs" style="left:10px;top:215px;width:14px;height:14px;border:1px solid #d6d9e4;border-radius:3px;background:#fff"></div>
<div class="cell" style="left:49px;top:204px">T000254</div>
<div class="cell" style="left:199px;top:204px;width:285px;text-overflow:ellipsis">【1.0-字段】部分函数方法描述准确，需要修改</div>
<div class="abs" style="left:499px;top:204px;width:77.5px;height:34px;display:flex;align-items:center"><div style="flex:1;height:8px;border-radius:4px;background:#e8ebf3;overflow:hidden"><div style="width:19.3%;height:8px;background:#4e87f6"></div></div><div style="font-size:12px;color:#333;margin-left:5.5px;white-space:nowrap">19.3%</div></div>
<div class="abs" style="left:601px;top:210px;width:59px;height:22px;border-radius:11px;background:#5b6b8d;color:#fff;font-size:13px;line-height:22px;text-align:center">未开始</div>
<svg class="abs" style="left:751px;top:211px" width="20" height="20" viewBox="0 0 20 20"><defs><clipPath id="ac6"><rect width="20" height="20" rx="4"/></clipPath></defs><g clip-path="url(#ac6)"><rect width="20" height="20" fill="#2f6d9c"/><rect y="13" width="20" height="7" fill="#1f5a78"/><rect y="12" width="20" height="1" fill="#5a90b0"/><path d="M8 13l3 7 3-7z" fill="#d8a878"/><ellipse cx="11" cy="10" rx="4.5" ry="3.8" fill="#f2eee8"/><ellipse cx="12" cy="6.5" rx="2.8" ry="2.6" fill="#e8e0d8"/><ellipse cx="14" cy="5.5" rx="1.2" ry="1.5" fill="#6a4a3a"/></g></svg>
<div class="cell" style="left:778px;top:204px">杜展扬</div>
<div class="cell" style="left:899px;top:204px">2023-11-01 21:38</div>
<div class="cell" style="left:1059px;top:204px;width:90px">2024-06-05 17</div>
<div class="abs" style="left:0;top:238px;width:1272px;height:34px;background:#fafafa;border-bottom:1px solid #eaeaec"></div>
<div class="abs" style="left:10px;top:249px;width:14px;height:14px;border:1px solid #d6d9e4;border-radius:3px;background:#fff"></div>
<div class="cell" style="left:49px;top:238px">T000253</div>
<div class="cell" style="left:199px;top:238px;width:285px;text-overflow:ellipsis">【消息队列】支持消息队列的自定义事务</div>
<div class="abs" style="left:499px;top:238px;width:77.5px;height:34px;display:flex;align-items:center"><div style="flex:1;height:8px;border-radius:4px;background:#e8ebf3;overflow:hidden"><div style="width:54.3%;height:8px;background:#4e87f6"></div></div><div style="font-size:12px;color:#333;margin-left:5.5px;white-space:nowrap">54.3%</div></div>
<div class="abs" style="left:601px;top:244px;width:59px;height:22px;border-radius:11px;background:#5b6b8d;color:#fff;font-size:13px;line-height:22px;text-align:center">未开始</div>
<svg class="abs" style="left:751px;top:245px" width="20" height="20" viewBox="0 0 20 20"><defs><clipPath id="ac7"><rect width="20" height="20" rx="4"/></clipPath></defs><g clip-path="url(#ac7)"><rect width="20" height="20" fill="#e6e6e4"/><rect y="10" width="20" height="10" fill="#c49a70"/><rect y="10" width="11" height="10" fill="#a87a50"/><ellipse cx="6" cy="8" rx="5.5" ry="3.5" fill="#7a9a48"/><circle cx="4" cy="7" r="1.3" fill="#d8d0a0"/><circle cx="8" cy="8" r="1.2" fill="#c8d8a0"/><rect x="1" y="2" width="1.2" height="9" fill="#8a6038"/></g></svg>
<div class="cell" style="left:778px;top:238px">郭闫</div>
<div class="cell" style="left:899px;top:238px">2023-11-04 21:38</div>
<div class="cell" style="left:1059px;top:238px;width:90px">2024-06-09 17</div>
<div class="abs" style="left:0;top:272px;width:1272px;height:34px;background:#fff;border-bottom:1px solid #eaeaec"></div>
<div class="abs" style="left:10px;top:283px;width:14px;height:14px;border:1px solid #d6d9e4;border-radius:3px;background:#fff"></div>
<div class="cell" style="left:49px;top:272px">T000252</div>
<div class="cell" style="left:199px;top:272px;width:285px;text-overflow:ellipsis">【监听器】数据表更新监听触发监听器，返回…</div>
<div class="abs" style="left:499px;top:272px;width:77.5px;height:34px;display:flex;align-items:center"><div style="flex:1;height:8px;border-radius:4px;background:#e8ebf3;overflow:hidden"><div style="width:32.1%;height:8px;background:#4e87f6"></div></div><div style="font-size:12px;color:#333;margin-left:5.5px;white-space:nowrap">32.1%</div></div>
<div class="abs" style="left:601px;top:278px;width:59px;height:22px;border-radius:11px;background:#5b6b8d;color:#fff;font-size:13px;line-height:22px;text-align:center">未开始</div>
<svg class="abs" style="left:751px;top:279px" width="20" height="20" viewBox="0 0 20 20"><defs><clipPath id="ac8"><rect width="20" height="20" rx="4"/></clipPath></defs><g clip-path="url(#ac8)"><rect width="20" height="20" fill="#8ea6e2"/><circle cx="10" cy="15" r="13" fill="#f5e27a"/><circle cx="10" cy="15.5" r="12" fill="#efc21e"/><circle cx="10" cy="13" r="1.2" fill="#f8f0c0"/></g></svg>
<div class="cell" style="left:778px;top:272px">曾烨森</div>
<div class="cell" style="left:899px;top:272px">2023-11-13 21:38</div>
<div class="cell" style="left:1059px;top:272px;width:90px">2024-06-20 17</div>
<div class="abs" style="left:0;top:306px;width:1272px;height:34px;background:#fafafa;border-bottom:1px solid #eaeaec"></div>
<div class="abs" style="left:10px;top:317px;width:14px;height:14px;border:1px solid #d6d9e4;border-radius:3px;background:#fff"></div>
<div class="cell" style="left:49px;top:306px">T000251</div>
<div class="cell" style="left:199px;top:306px;width:285px;text-overflow:ellipsis">【脚本】单点登录跳转链接需要支持query参数</div>
<div class="abs" style="left:499px;top:306px;width:77.5px;height:34px;display:flex;align-items:center"><div style="flex:1;height:8px;border-radius:4px;background:#e8ebf3;overflow:hidden"><div style="width:31.4%;height:8px;background:#4e87f6"></div></div><div style="font-size:12px;color:#333;margin-left:5.5px;white-space:nowrap">31.4%</div></div>
<div class="abs" style="left:601px;top:312px;width:59px;height:22px;border-radius:11px;background:#5b6b8d;color:#fff;font-size:13px;line-height:22px;text-align:center">未开始</div>
<svg class="abs" style="left:751px;top:313px" width="20" height="20" viewBox="0 0 20 20"><defs><clipPath id="ac9"><rect width="20" height="20" rx="4"/></clipPath></defs><g clip-path="url(#ac9)"><rect width="20" height="20" fill="#060606"/><ellipse cx="12.5" cy="10" rx="6.5" ry="6" fill="#ddd6cc"/><ellipse cx="14" cy="14" rx="5" ry="4" fill="#7a7068"/><path d="M3 9l5-1.5 1 3-3 1z" fill="#e8b020"/><circle cx="9.5" cy="8.5" r=".8" fill="#222"/></g></svg>
<div class="cell" style="left:778px;top:306px">赖泽城</div>
<div class="cell" style="left:899px;top:306px">2023-11-18 21:38</div>
<div class="cell" style="left:1059px;top:306px;width:90px">2024-06-21 17</div>
<div class="abs" style="left:0;top:340px;width:1272px;height:34px;background:#fff;border-bottom:1px solid #eaeaec"></div>
<div class="abs" style="left:10px;top:351px;width:14px;height:14px;border:1px solid #d6d9e4;border-radius:3px;background:#fff"></div>
<div class="cell" style="left:49px;top:340px">T000250</div>
<div class="cell" style="left:199px;top:340px;width:285px;text-overflow:ellipsis">【数据表】数据源设置从脚本获取时，报错内…</div>
<div class="abs" style="left:499px;top:340px;width:77.5px;height:34px;display:flex;align-items:center"><div style="flex:1;height:8px;border-radius:4px;background:#e8ebf3;overflow:hidden"><div style="width:5.6%;height:8px;background:#4e87f6"></div></div><div style="font-size:12px;color:#333;margin-left:5.5px;white-space:nowrap">5.6%</div></div>
<div class="abs" style="left:601px;top:346px;width:59px;height:22px;border-radius:11px;background:#5b6b8d;color:#fff;font-size:13px;line-height:22px;text-align:center">未开始</div>
<svg class="abs" style="left:751px;top:347px" width="20" height="20" viewBox="0 0 20 20"><defs><clipPath id="ac10"><rect width="20" height="20" rx="4"/></clipPath></defs><g clip-path="url(#ac10)"><rect width="20" height="20" fill="#062070"/><path d="M2 15L16 4" stroke="#1a5ad8" stroke-width="4" opacity=".8"/><circle cx="15.5" cy="4" r="3" fill="#4ab0ff"/><circle cx="14" cy="12" r="1.8" fill="#2a7af0"/><circle cx="4" cy="14" r="2" fill="#1a50c0"/></g></svg>
<div class="cell" style="left:778px;top:340px">李健</div>
<div class="cell" style="left:899px;top:340px">2023-11-25 21:38</div>
<div class="cell" style="left:1059px;top:340px;width:90px">2024-07-01 17</div>
<div class="abs" style="left:0;top:374px;width:1272px;height:34px;background:#fafafa;border-bottom:1px solid #eaeaec"></div>
<div class="abs" style="left:10px;top:385px;width:14px;height:14px;border:1px solid #d6d9e4;border-radius:3px;background:#fff"></div>
<div class="cell" style="left:49px;top:374px">T000249</div>
<div class="cell" style="left:199px;top:374px;width:285px;text-overflow:ellipsis">【通知】通知列表已读和未读视觉上的区分不…</div>
<div class="abs" style="left:499px;top:374px;width:77.5px;height:34px;display:flex;align-items:center"><div style="flex:1;height:8px;border-radius:4px;background:#e8ebf3;overflow:hidden"><div style="width:79.2%;height:8px;background:#4e87f6"></div></div><div style="font-size:12px;color:#333;margin-left:5.5px;white-space:nowrap">79.2%</div></div>
<div class="abs" style="left:601px;top:380px;width:59px;height:22px;border-radius:11px;background:#5b6b8d;color:#fff;font-size:13px;line-height:22px;text-align:center">未开始</div>
<svg class="abs" style="left:751px;top:381px" width="20" height="20" viewBox="0 0 20 20"><defs><clipPath id="ac11"><rect width="20" height="20" rx="4"/></clipPath></defs><g clip-path="url(#ac11)"><rect width="20" height="20" fill="#f2f0f2"/><circle cx="10" cy="10" r="9" fill="#e6e2e6"/><path d="M5 7l5 1 4-4 1 5 3 2-4 2 1 4-4-2-3 3-1-4-3-1 3-3z" fill="#e83a2a"/><circle cx="10" cy="10" r="1.5" fill="#8a2a1a"/></g></svg>
<div class="cell" style="left:778px;top:374px">王延峰</div>
<div class="cell" style="left:899px;top:374px">2023-11-20 21:38</div>
<div class="cell" style="left:1059px;top:374px;width:90px">2024-06-25 17</div>
<div class="abs" style="left:0;top:408px;width:1272px;height:34px;background:#fff;border-bottom:1px solid #eaeaec"></div>
<div class="abs" style="left:10px;top:419px;width:14px;height:14px;border:1px solid #d6d9e4;border-radius:3px;background:#fff"></div>
<div class="cell" style="left:49px;top:408px">T000248</div>
<div class="cell" style="left:199px;top:408px;width:285px;text-overflow:ellipsis">【数据表】列表类型字段设置复选框和单选框…</div>
<div class="abs" style="left:499px;top:408px;width:77.5px;height:34px;display:flex;align-items:center"><div style="flex:1;height:8px;border-radius:4px;background:#e8ebf3;overflow:hidden"><div style="width:65.9%;height:8px;background:#4e87f6"></div></div><div style="font-size:12px;color:#333;margin-left:5.5px;white-space:nowrap">65.9%</div></div>
<div class="abs" style="left:601px;top:414px;width:59px;height:22px;border-radius:11px;background:#5b6b8d;color:#fff;font-size:13px;line-height:22px;text-align:center">未开始</div>
<svg class="abs" style="left:751px;top:415px" width="20" height="20" viewBox="0 0 20 20"><defs><clipPath id="ac12"><rect width="20" height="20" rx="4"/></clipPath></defs><g clip-path="url(#ac12)"><rect width="20" height="20" fill="#2f6d9c"/><rect y="13" width="20" height="7" fill="#1f5a78"/><rect y="12" width="20" height="1" fill="#5a90b0"/><path d="M8 13l3 7 3-7z" fill="#d8a878"/><ellipse cx="11" cy="10" rx="4.5" ry="3.8" fill="#f2eee8"/><ellipse cx="12" cy="6.5" rx="2.8" ry="2.6" fill="#e8e0d8"/><ellipse cx="14" cy="5.5" rx="1.2" ry="1.5" fill="#6a4a3a"/></g></svg>
<div class="cell" style="left:778px;top:408px">杜展扬</div>
<div class="cell" style="left:899px;top:408px">2023-11-21 21:38</div>
<div class="cell" style="left:1059px;top:408px;width:90px">2024-06-27 17</div>
<div class="abs" style="left:0;top:442px;width:1272px;height:34px;background:#fafafa;border-bottom:1px solid #eaeaec"></div>
<div class="abs" style="left:10px;top:453px;width:14px;height:14px;border:1px solid #d6d9e4;border-radius:3px;background:#fff"></div>
<div class="cell" style="left:49px;top:442px">T000247</div>
<div class="cell" style="left:199px;top:442px;width:285px;text-overflow:ellipsis">【数据表】列表类型字段中有评分字段时，创…</div>
<div class="abs" style="left:499px;top:442px;width:77.5px;height:34px;display:flex;align-items:center"><div style="flex:1;height:8px;border-radius:4px;background:#e8ebf3;overflow:hidden"><div style="width:59.4%;height:8px;background:#4e87f6"></div></div><div style="font-size:12px;color:#333;margin-left:5.5px;white-space:nowrap">59.4%</div></div>
<div class="abs" style="left:601px;top:448px;width:59px;height:22px;border-radius:11px;background:#5b6b8d;color:#fff;font-size:13px;line-height:22px;text-align:center">未开始</div>
<svg class="abs" style="left:751px;top:449px" width="20" height="20" viewBox="0 0 20 20"><defs><clipPath id="ac13"><rect width="20" height="20" rx="4"/></clipPath></defs><g clip-path="url(#ac13)"><rect width="20" height="20" fill="#e6e6e4"/><rect y="10" width="20" height="10" fill="#c49a70"/><rect y="10" width="11" height="10" fill="#a87a50"/><ellipse cx="6" cy="8" rx="5.5" ry="3.5" fill="#7a9a48"/><circle cx="4" cy="7" r="1.3" fill="#d8d0a0"/><circle cx="8" cy="8" r="1.2" fill="#c8d8a0"/><rect x="1" y="2" width="1.2" height="9" fill="#8a6038"/></g></svg>
<div class="cell" style="left:778px;top:442px">郭闫</div>
<div class="cell" style="left:899px;top:442px">2023-11-25 21:38</div>
<div class="cell" style="left:1059px;top:442px;width:90px">2024-06-28 17</div>
<div class="abs" style="left:0;top:476px;width:1272px;height:34px;background:#fff;border-bottom:1px solid #eaeaec"></div>
<div class="abs" style="left:10px;top:487px;width:14px;height:14px;border:1px solid #d6d9e4;border-radius:3px;background:#fff"></div>
<div class="cell" style="left:49px;top:476px">T000246</div>
<div class="cell" style="left:199px;top:476px;width:285px;text-overflow:ellipsis">【消息队列】消息推送调用自动化创建数据，…</div>
<div class="abs" style="left:499px;top:476px;width:77.5px;height:34px;display:flex;align-items:center"><div style="flex:1;height:8px;border-radius:4px;background:#e8ebf3;overflow:hidden"><div style="width:98.6%;height:8px;background:#4e87f6"></div></div><div style="font-size:12px;color:#333;margin-left:5.5px;white-space:nowrap">98.6%</div></div>
<div class="abs" style="left:601px;top:482px;width:59px;height:22px;border-radius:11px;background:#5b6b8d;color:#fff;font-size:13px;line-height:22px;text-align:center">未开始</div>
<svg class="abs" style="left:751px;top:483px" width="20" height="20" viewBox="0 0 20 20"><defs><clipPath id="ac14"><rect width="20" height="20" rx="4"/></clipPath></defs><g clip-path="url(#ac14)"><rect width="20" height="20" fill="#8ea6e2"/><circle cx="10" cy="15" r="13" fill="#f5e27a"/><circle cx="10" cy="15.5" r="12" fill="#efc21e"/><circle cx="10" cy="13" r="1.2" fill="#f8f0c0"/></g></svg>
<div class="cell" style="left:778px;top:476px">曾烨森</div>
<div class="cell" style="left:899px;top:476px">2023-11-14 21:38</div>
<div class="cell" style="left:1059px;top:476px;width:90px">2024-06-21 17</div>
<div class="abs" style="left:0;top:510px;width:1272px;height:34px;background:#fafafa;border-bottom:1px solid #eaeaec"></div>
<div class="abs" style="left:10px;top:521px;width:14px;height:14px;border:1px solid #d6d9e4;border-radius:3px;background:#fff"></div>
<div class="cell" style="left:49px;top:510px">T000245</div>
<div class="cell" style="left:199px;top:510px;width:285px;text-overflow:ellipsis">【数据表】自动化和脚本程序查询数据来源脚…</div>
<div class="abs" style="left:499px;top:510px;width:77.5px;height:34px;display:flex;align-items:center"><div style="flex:1;height:8px;border-radius:4px;background:#e8ebf3;overflow:hidden"><div style="width:27.3%;height:8px;background:#4e87f6"></div></div><div style="font-size:12px;color:#333;margin-left:5.5px;white-space:nowrap">27.3%</div></div>
<div class="abs" style="left:601px;top:516px;width:59px;height:22px;border-radius:11px;background:#5b6b8d;color:#fff;font-size:13px;line-height:22px;text-align:center">未开始</div>
<svg class="abs" style="left:751px;top:517px" width="20" height="20" viewBox="0 0 20 20"><defs><clipPath id="ac15"><rect width="20" height="20" rx="4"/></clipPath></defs><g clip-path="url(#ac15)"><rect width="20" height="20" fill="#060606"/><ellipse cx="12.5" cy="10" rx="6.5" ry="6" fill="#ddd6cc"/><ellipse cx="14" cy="14" rx="5" ry="4" fill="#7a7068"/><path d="M3 9l5-1.5 1 3-3 1z" fill="#e8b020"/><circle cx="9.5" cy="8.5" r=".8" fill="#222"/></g></svg>
<div class="cell" style="left:778px;top:510px">赖泽城</div>
<div class="cell" style="left:899px;top:510px">2023-11-19 21:38</div>
<div class="cell" style="left:1059px;top:510px;width:90px">2024-06-25 17</div>
<div class="abs" style="left:0;top:544px;width:1272px;height:34px;background:#fff;border-bottom:1px solid #eaeaec"></div>
<div class="abs" style="left:10px;top:555px;width:14px;height:14px;border:1px solid #d6d9e4;border-radius:3px;background:#fff"></div>
<div class="cell" style="left:49px;top:544px">T000244</div>
<div class="cell" style="left:199px;top:544px;width:285px;text-overflow:ellipsis">【脚本】informat.company.deleteAppGroup()…</div>
<div class="abs" style="left:499px;top:544px;width:77.5px;height:34px;display:flex;align-items:center"><div style="flex:1;height:8px;border-radius:4px;background:#e8ebf3;overflow:hidden"><div style="width:84%;height:8px;background:#4e87f6"></div></div><div style="font-size:12px;color:#333;margin-left:5.5px;white-space:nowrap">84%</div></div>
<div class="abs" style="left:601px;top:550px;width:59px;height:22px;border-radius:11px;background:#5b6b8d;color:#fff;font-size:13px;line-height:22px;text-align:center">未开始</div>
<svg class="abs" style="left:751px;top:551px" width="20" height="20" viewBox="0 0 20 20"><defs><clipPath id="ac16"><rect width="20" height="20" rx="4"/></clipPath></defs><g clip-path="url(#ac16)"><rect width="20" height="20" fill="#062070"/><path d="M2 15L16 4" stroke="#1a5ad8" stroke-width="4" opacity=".8"/><circle cx="15.5" cy="4" r="3" fill="#4ab0ff"/><circle cx="14" cy="12" r="1.8" fill="#2a7af0"/><circle cx="4" cy="14" r="2" fill="#1a50c0"/></g></svg>
<div class="cell" style="left:778px;top:544px">李健</div>
<div class="cell" style="left:899px;top:544px">2023-10-31 21:38</div>
<div class="cell" style="left:1059px;top:544px;width:90px">2024-06-07 17</div>
<div class="abs" style="left:0;top:578px;width:1272px;height:34px;background:#fafafa;border-bottom:1px solid #eaeaec"></div>
<div class="abs" style="left:10px;top:589px;width:14px;height:14px;border:1px solid #d6d9e4;border-radius:3px;background:#fff"></div>
<div class="cell" style="left:49px;top:578px">T000243</div>
<div class="cell" style="left:199px;top:578px;width:285px;text-overflow:ellipsis">【数据表】设置日期过滤条件的待选值以后，…</div>
<div class="abs" style="left:499px;top:578px;width:77.5px;height:34px;display:flex;align-items:center"><div style="flex:1;height:8px;border-radius:4px;background:#e8ebf3;overflow:hidden"><div style="width:17.6%;height:8px;background:#4e87f6"></div></div><div style="font-size:12px;color:#333;margin-left:5.5px;white-space:nowrap">17.6%</div></div>
<div class="abs" style="left:601px;top:584px;width:59px;height:22px;border-radius:11px;background:#5b6b8d;color:#fff;font-size:13px;line-height:22px;text-align:center">未开始</div>
<svg class="abs" style="left:751px;top:585px" width="20" height="20" viewBox="0 0 20 20"><defs><clipPath id="ac17"><rect width="20" height="20" rx="4"/></clipPath></defs><g clip-path="url(#ac17)"><rect width="20" height="20" fill="#f2f0f2"/><circle cx="10" cy="10" r="9" fill="#e6e2e6"/><path d="M5 7l5 1 4-4 1 5 3 2-4 2 1 4-4-2-3 3-1-4-3-1 3-3z" fill="#e83a2a"/><circle cx="10" cy="10" r="1.5" fill="#8a2a1a"/></g></svg>
<div class="cell" style="left:778px;top:578px">王延峰</div>
<div class="cell" style="left:899px;top:578px">2023-10-28 21:38</div>
<div class="cell" style="left:1059px;top:578px;width:90px">2024-06-03 17</div>
<div class="abs" style="left:0;top:612px;width:1272px;height:34px;background:#fff;border-bottom:1px solid #eaeaec"></div>
<div class="abs" style="left:10px;top:623px;width:14px;height:14px;border:1px solid #d6d9e4;border-radius:3px;background:#fff"></div>
<div class="cell" style="left:49px;top:612px">T000242</div>
<div class="cell" style="left:199px;top:612px;width:285px;text-overflow:ellipsis">【审批流】终止流程时填写备注的模板，没有…</div>
<div class="abs" style="left:499px;top:612px;width:77.5px;height:34px;display:flex;align-items:center"><div style="flex:1;height:8px;border-radius:4px;background:#e8ebf3;overflow:hidden"><div style="width:81.1%;height:8px;background:#4e87f6"></div></div><div style="font-size:12px;color:#333;margin-left:5.5px;white-space:nowrap">81.1%</div></div>
<div class="abs" style="left:601px;top:618px;width:59px;height:22px;border-radius:11px;background:#5b6b8d;color:#fff;font-size:13px;line-height:22px;text-align:center">未开始</div>
<svg class="abs" style="left:751px;top:619px" width="20" height="20" viewBox="0 0 20 20"><defs><clipPath id="ac18"><rect width="20" height="20" rx="4"/></clipPath></defs><g clip-path="url(#ac18)"><rect width="20" height="20" fill="#2f6d9c"/><rect y="13" width="20" height="7" fill="#1f5a78"/><rect y="12" width="20" height="1" fill="#5a90b0"/><path d="M8 13l3 7 3-7z" fill="#d8a878"/><ellipse cx="11" cy="10" rx="4.5" ry="3.8" fill="#f2eee8"/><ellipse cx="12" cy="6.5" rx="2.8" ry="2.6" fill="#e8e0d8"/><ellipse cx="14" cy="5.5" rx="1.2" ry="1.5" fill="#6a4a3a"/></g></svg>
<div class="cell" style="left:778px;top:612px">杜展扬</div>
<div class="cell" style="left:899px;top:612px">2023-11-08 21:38</div>
<div class="cell" style="left:1059px;top:612px;width:90px">2024-06-13 17</div>
<div class="abs" style="left:0;top:646px;width:1272px;height:34px;background:#fafafa;border-bottom:1px solid #eaeaec"></div>
<div class="abs" style="left:10px;top:657px;width:14px;height:14px;border:1px solid #d6d9e4;border-radius:3px;background:#fff"></div>
<div class="cell" style="left:49px;top:646px">T000241</div>
<div class="cell" style="left:199px;top:646px;width:285px;text-overflow:ellipsis">【工作流】在流程信息配置终止流程按钮后，…</div>
<div class="abs" style="left:499px;top:646px;width:77.5px;height:34px;display:flex;align-items:center"><div style="flex:1;height:8px;border-radius:4px;background:#e8ebf3;overflow:hidden"><div style="width:11.8%;height:8px;background:#4e87f6"></div></div><div style="font-size:12px;color:#333;margin-left:5.5px;white-space:nowrap">11.8%</div></div>
<div class="abs" style="left:601px;top:652px;width:59px;height:22px;border-radius:11px;background:#5b6b8d;color:#fff;font-size:13px;line-height:22px;text-align:center">未开始</div>
<svg class="abs" style="left:751px;top:653px" width="20" height="20" viewBox="0 0 20 20"><defs><clipPath id="ac19"><rect width="20" height="20" rx="4"/></clipPath></defs><g clip-path="url(#ac19)"><rect width="20" height="20" fill="#e6e6e4"/><rect y="10" width="20" height="10" fill="#c49a70"/><rect y="10" width="11" height="10" fill="#a87a50"/><ellipse cx="6" cy="8" rx="5.5" ry="3.5" fill="#7a9a48"/><circle cx="4" cy="7" r="1.3" fill="#d8d0a0"/><circle cx="8" cy="8" r="1.2" fill="#c8d8a0"/><rect x="1" y="2" width="1.2" height="9" fill="#8a6038"/></g></svg>
<div class="cell" style="left:778px;top:646px">郭闫</div>
<div class="cell" style="left:899px;top:646px">2023-11-16 21:38</div>
<div class="cell" style="left:1059px;top:646px;width:90px">2024-06-19 17</div>
<div class="abs" style="left:0;top:680px;width:1272px;height:34px;background:#fff;border-bottom:1px solid #eaeaec"></div>
<div class="abs" style="left:10px;top:691px;width:14px;height:14px;border:1px solid #d6d9e4;border-radius:3px;background:#fff"></div>
<div class="cell" style="left:49px;top:680px">T000240</div>
<div class="cell" style="left:199px;top:680px;width:285px;text-overflow:ellipsis">【数据表】日期筛选条件设置为在范围中时，…</div>
<div class="abs" style="left:499px;top:680px;width:77.5px;height:34px;display:flex;align-items:center"><div style="flex:1;height:8px;border-radius:4px;background:#e8ebf3;overflow:hidden"><div style="width:43%;height:8px;background:#4e87f6"></div></div><div style="font-size:12px;color:#333;margin-left:5.5px;white-space:nowrap">43%</div></div>
<div class="abs" style="left:601px;top:686px;width:59px;height:22px;border-radius:11px;background:#5b6b8d;color:#fff;font-size:13px;line-height:22px;text-align:center">未开始</div>
<svg class="abs" style="left:751px;top:687px" width="20" height="20" viewBox="0 0 20 20"><defs><clipPath id="ac20"><rect width="20" height="20" rx="4"/></clipPath></defs><g clip-path="url(#ac20)"><rect width="20" height="20" fill="#8ea6e2"/><circle cx="10" cy="15" r="13" fill="#f5e27a"/><circle cx="10" cy="15.5" r="12" fill="#efc21e"/><circle cx="10" cy="13" r="1.2" fill="#f8f0c0"/></g></svg>
<div class="cell" style="left:778px;top:680px">曾烨森</div>
<div class="cell" style="left:899px;top:680px">2023-11-09 21:38</div>
<div class="cell" style="left:1059px;top:680px;width:90px">2024-06-14 17</div>
<div class="abs" style="left:0;top:714px;width:1272px;height:34px;background:#fafafa;border-bottom:1px solid #eaeaec"></div>
<div class="abs" style="left:10px;top:725px;width:14px;height:14px;border:1px solid #d6d9e4;border-radius:3px;background:#fff"></div>
<div class="cell" style="left:49px;top:714px">T000239</div>
<div class="cell" style="left:199px;top:714px;width:285px;text-overflow:ellipsis">【数据表】日期筛选在表达式中使用day_of_…</div>
<div class="abs" style="left:499px;top:714px;width:77.5px;height:34px;display:flex;align-items:center"><div style="flex:1;height:8px;border-radius:4px;background:#e8ebf3;overflow:hidden"><div style="width:65.2%;height:8px;background:#4e87f6"></div></div><div style="font-size:12px;color:#333;margin-left:5.5px;white-space:nowrap">65.2%</div></div>
<div class="abs" style="left:601px;top:720px;width:59px;height:22px;border-radius:11px;background:#5b6b8d;color:#fff;font-size:13px;line-height:22px;text-align:center">未开始</div>
<svg class="abs" style="left:751px;top:721px" width="20" height="20" viewBox="0 0 20 20"><defs><clipPath id="ac21"><rect width="20" height="20" rx="4"/></clipPath></defs><g clip-path="url(#ac21)"><rect width="20" height="20" fill="#060606"/><ellipse cx="12.5" cy="10" rx="6.5" ry="6" fill="#ddd6cc"/><ellipse cx="14" cy="14" rx="5" ry="4" fill="#7a7068"/><path d="M3 9l5-1.5 1 3-3 1z" fill="#e8b020"/><circle cx="9.5" cy="8.5" r=".8" fill="#222"/></g></svg>
<div class="cell" style="left:778px;top:714px">赖泽城</div>
<div class="cell" style="left:899px;top:714px">2023-11-25 21:38</div>
<div class="cell" style="left:1059px;top:714px;width:90px">2024-07-02 17</div>
<div class="abs" style="left:0;top:748px;width:1272px;height:34px;background:#fff;border-bottom:1px solid #eaeaec"></div>
<div class="abs" style="left:10px;top:759px;width:14px;height:14px;border:1px solid #d6d9e4;border-radius:3px;background:#fff"></div>
<div class="cell" style="left:49px;top:748px">T000238</div>
<div class="cell" style="left:199px;top:748px;width:285px;text-overflow:ellipsis">【数据表】列表类型数据选择数据删除后，被…</div>
<div class="abs" style="left:499px;top:748px;width:77.5px;height:34px;display:flex;align-items:center"><div style="flex:1;height:8px;border-radius:4px;background:#e8ebf3;overflow:hidden"><div style="width:69.6%;height:8px;background:#4e87f6"></div></div><div style="font-size:12px;color:#333;margin-left:5.5px;white-space:nowrap">69.6%</div></div>
<div class="abs" style="left:601px;top:754px;width:59px;height:22px;border-radius:11px;background:#5b6b8d;color:#fff;font-size:13px;line-height:22px;text-align:center">未开始</div>
<svg class="abs" style="left:751px;top:755px" width="20" height="20" viewBox="0 0 20 20"><defs><clipPath id="ac22"><rect width="20" height="20" rx="4"/></clipPath></defs><g clip-path="url(#ac22)"><rect width="20" height="20" fill="#062070"/><path d="M2 15L16 4" stroke="#1a5ad8" stroke-width="4" opacity=".8"/><circle cx="15.5" cy="4" r="3" fill="#4ab0ff"/><circle cx="14" cy="12" r="1.8" fill="#2a7af0"/><circle cx="4" cy="14" r="2" fill="#1a50c0"/></g></svg>
<div class="cell" style="left:778px;top:748px">李健</div>
<div class="cell" style="left:899px;top:748px">2023-11-02 21:38</div>
<div class="cell" style="left:1059px;top:748px;width:90px">2024-06-06 17</div>
<div class="abs" style="left:0;top:782px;width:1272px;height:34px;background:#fafafa;border-bottom:1px solid #eaeaec"></div>
<div class="abs" style="left:10px;top:793px;width:14px;height:14px;border:1px solid #d6d9e4;border-radius:3px;background:#fff"></div>
<div class="cell" style="left:49px;top:782px">T000237</div>
<div class="cell" style="left:199px;top:782px;width:285px;text-overflow:ellipsis">【问卷调查】移动端勾选市辖区的数据时，会…</div>
<div class="abs" style="left:499px;top:782px;width:77.5px;height:34px;display:flex;align-items:center"><div style="flex:1;height:8px;border-radius:4px;background:#e8ebf3;overflow:hidden"><div style="width:78.5%;height:8px;background:#4e87f6"></div></div><div style="font-size:12px;color:#333;margin-left:5.5px;white-space:nowrap">78.5%</div></div>
<div class="abs" style="left:601px;top:788px;width:59px;height:22px;border-radius:11px;background:#5b6b8d;color:#fff;font-size:13px;line-height:22px;text-align:center">未开始</div>
<svg class="abs" style="left:751px;top:789px" width="20" height="20" viewBox="0 0 20 20"><defs><clipPath id="ac23"><rect width="20" height="20" rx="4"/></clipPath></defs><g clip-path="url(#ac23)"><rect width="20" height="20" fill="#f2f0f2"/><circle cx="10" cy="10" r="9" fill="#e6e2e6"/><path d="M5 7l5 1 4-4 1 5 3 2-4 2 1 4-4-2-3 3-1-4-3-1 3-3z" fill="#e83a2a"/><circle cx="10" cy="10" r="1.5" fill="#8a2a1a"/></g></svg>
<div class="cell" style="left:778px;top:782px">王延峰</div>
<div class="cell" style="left:899px;top:782px">2023-11-02 21:38</div>
<div class="cell" style="left:1059px;top:782px;width:90px">2024-06-05 17</div>
<div class="abs" style="left:0;top:816px;width:1272px;height:34px;background:#fff;border-bottom:1px solid #eaeaec"></div>
<div class="abs" style="left:10px;top:827px;width:14px;height:14px;border:1px solid #d6d9e4;border-radius:3px;background:#fff"></div>
<div class="cell" style="left:49px;top:816px">T000236</div>
<div class="cell" style="left:199px;top:816px;width:285px;text-overflow:ellipsis">【数据表】数据源来自脚本新增通过ID查询记…</div>
<div class="abs" style="left:499px;top:816px;width:77.5px;height:34px;display:flex;align-items:center"><div style="flex:1;height:8px;border-radius:4px;background:#e8ebf3;overflow:hidden"><div style="width:23.5%;height:8px;background:#4e87f6"></div></div><div style="font-size:12px;color:#333;margin-left:5.5px;white-space:nowrap">23.5%</div></div>
<div class="abs" style="left:601px;top:822px;width:59px;height:22px;border-radius:11px;background:#5b6b8d;color:#fff;font-size:13px;line-height:22px;text-align:center">未开始</div>
<svg class="abs" style="left:751px;top:823px" width="20" height="20" viewBox="0 0 20 20"><defs><clipPath id="ac24"><rect width="20" height="20" rx="4"/></clipPath></defs><g clip-path="url(#ac24)"><rect width="20" height="20" fill="#2f6d9c"/><rect y="13" width="20" height="7" fill="#1f5a78"/><rect y="12" width="20" height="1" fill="#5a90b0"/><path d="M8 13l3 7 3-7z" fill="#d8a878"/><ellipse cx="11" cy="10" rx="4.5" ry="3.8" fill="#f2eee8"/><ellipse cx="12" cy="6.5" rx="2.8" ry="2.6" fill="#e8e0d8"/><ellipse cx="14" cy="5.5" rx="1.2" ry="1.5" fill="#6a4a3a"/></g></svg>
<div class="cell" style="left:778px;top:816px">杜展扬</div>
<div class="cell" style="left:899px;top:816px">2023-11-13 21:38</div>
<div class="cell" style="left:1059px;top:816px;width:90px">2024-06-16 17</div>
<div class="abs" style="left:0;top:850px;width:1272px;height:34px;background:#fafafa;border-bottom:1px solid #eaeaec"></div>
<div class="abs" style="left:10px;top:861px;width:14px;height:14px;border:1px solid #d6d9e4;border-radius:3px;background:#fff"></div>
<div class="cell" style="left:49px;top:850px">T000235</div>
<div class="cell" style="left:199px;top:850px;width:285px;text-overflow:ellipsis">【数据表】主表修改在列表类型的字段中新增…</div>
<div class="abs" style="left:499px;top:850px;width:77.5px;height:34px;display:flex;align-items:center"><div style="flex:1;height:8px;border-radius:4px;background:#e8ebf3;overflow:hidden"><div style="width:49.3%;height:8px;background:#4e87f6"></div></div><div style="font-size:12px;color:#333;margin-left:5.5px;white-space:nowrap">49.3%</div></div>
<div class="abs" style="left:601px;top:856px;width:59px;height:22px;border-radius:11px;background:#5b6b8d;color:#fff;font-size:13px;line-height:22px;text-align:center">未开始</div>
<svg class="abs" style="left:751px;top:857px" width="20" height="20" viewBox="0 0 20 20"><defs><clipPath id="ac25"><rect width="20" height="20" rx="4"/></clipPath></defs><g clip-path="url(#ac25)"><rect width="20" height="20" fill="#e6e6e4"/><rect y="10" width="20" height="10" fill="#c49a70"/><rect y="10" width="11" height="10" fill="#a87a50"/><ellipse cx="6" cy="8" rx="5.5" ry="3.5" fill="#7a9a48"/><circle cx="4" cy="7" r="1.3" fill="#d8d0a0"/><circle cx="8" cy="8" r="1.2" fill="#c8d8a0"/><rect x="1" y="2" width="1.2" height="9" fill="#8a6038"/></g></svg>
<div class="cell" style="left:778px;top:850px">郭闫</div>
<div class="cell" style="left:899px;top:850px">2023-11-19 21:38</div>
<div class="cell" style="left:1059px;top:850px;width:90px">2024-06-23 17</div>
</div>
<div class="abs" style="left:282px;top:336px;width:1px;height:945px;background:#eaeaec"></div>
<div class="abs" style="left:432px;top:336px;width:1px;height:945px;background:#eaeaec"></div>
<div class="abs" style="left:732px;top:336px;width:1px;height:945px;background:#eaeaec"></div>
<div class="abs" style="left:832px;top:336px;width:1px;height:945px;background:#eaeaec"></div>
<div class="abs" style="left:982px;top:336px;width:1px;height:945px;background:#eaeaec"></div>
<div class="abs" style="left:1132px;top:336px;width:1px;height:945px;background:#eaeaec"></div>
<div class="abs" style="left:1292px;top:336px;width:1px;height:945px;background:#eaeaec"></div>
<div class="abs" style="left:254px;top:347px;width:14px;height:14px;border:1px solid #d6d9e4;border-radius:3px;background:#fff"></div>
<div class="abs" style="left:294.5px;top:336px;height:35px;line-height:35px;font-size:12px;color:#999;white-space:nowrap">#</div>
<div class="abs" style="left:308px;top:336px;height:35px;line-height:35px;font-size:12px;color:#444;white-space:nowrap">编号</div>
<div class="abs" style="left:408px;top:351px;width:0;height:0;border-left:4px solid transparent;border-right:4px solid transparent;border-top:4px solid #888"></div>
<div class="abs" style="left:446px;top:336px;height:35px;line-height:35px;font-size:12px;color:#999;white-space:nowrap">T</div>
<div class="abs" style="left:457.5px;top:336px;height:35px;line-height:35px;font-size:12px;color:#444;white-space:nowrap">名称</div>
<div class="abs" style="left:708px;top:351px;width:0;height:0;border-left:4px solid transparent;border-right:4px solid transparent;border-top:4px solid #888"></div>
<div class="abs" style="left:745.5px;top:336px;height:35px;line-height:35px;font-size:12px;color:#999;white-space:nowrap">1</div>
<div class="abs" style="left:757.5px;top:336px;height:35px;line-height:35px;font-size:12px;color:#444;white-space:nowrap">完成度</div>
<div class="abs" style="left:808px;top:351px;width:0;height:0;border-left:4px solid transparent;border-right:4px solid transparent;border-top:4px solid #888"></div>
<div class="abs" style="left:843.5px;top:336px;height:35px;line-height:35px;font-size:12px;color:#999;white-space:nowrap"><svg width="10" height="10" viewBox="0 0 12 12" style="vertical-align:-1px"><circle cx="6" cy="6" r="5.2" fill="none" stroke="#888" stroke-width="1.1"/><path d="M3.6 6.1l1.7 1.6 3.1-3.2" fill="none" stroke="#888" stroke-width="1.1"/></svg></div>
<div class="abs" style="left:857.5px;top:336px;height:35px;line-height:35px;font-size:12px;color:#444;white-space:nowrap">状态</div>
<div class="abs" style="left:958px;top:351px;width:0;height:0;border-left:4px solid transparent;border-right:4px solid transparent;border-top:4px solid #888"></div>
<div class="abs" style="left:994px;top:336px;height:35px;line-height:35px;font-size:12px;color:#999;white-space:nowrap"><svg width="10" height="10" viewBox="0 0 12 12" style="vertical-align:-1px"><circle cx="6" cy="3.8" r="2.6" fill="none" stroke="#888" stroke-width="1.1"/><path d="M1.5 11.5a4.5 4.5 0 019 0" fill="none" stroke="#888" stroke-width="1.1"/></svg></div>
<div class="abs" style="left:1007.5px;top:336px;height:35px;line-height:35px;font-size:12px;color:#444;white-space:nowrap">责任人</div>
<div class="abs" style="left:1108px;top:351px;width:0;height:0;border-left:4px solid transparent;border-right:4px solid transparent;border-top:4px solid #888"></div>
<div class="abs" style="left:1144px;top:336px;height:35px;line-height:35px;font-size:12px;color:#999;white-space:nowrap"><svg width="10" height="10" viewBox="0 0 12 12" style="vertical-align:-1px"><rect x="1" y="2" width="10" height="9" fill="none" stroke="#888" stroke-width="1.1"/><path d="M1 5h10M4 0.5v3M8 0.5v3" stroke="#888" stroke-width="1.1"/></svg></div>
<div class="abs" style="left:1157.5px;top:336px;height:35px;line-height:35px;font-size:12px;color:#444;white-space:nowrap">开始时间</div>
<div class="abs" style="left:1268px;top:351px;width:0;height:0;border-left:4px solid transparent;border-right:4px solid transparent;border-top:4px solid #888"></div>
<div class="abs" style="left:1304px;top:336px;height:35px;line-height:35px;font-size:12px;color:#999;white-space:nowrap"><svg width="10" height="10" viewBox="0 0 12 12" style="vertical-align:-1px"><rect x="1" y="2" width="10" height="9" fill="none" stroke="#888" stroke-width="1.1"/><path d="M1 5h10M4 0.5v3M8 0.5v3" stroke="#888" stroke-width="1.1"/></svg></div>
<div class="abs" style="left:1317.5px;top:336px;height:35px;line-height:35px;font-size:12px;color:#444;white-space:nowrap">预计开始时间</div>
<div class="abs" style="left:244px;top:1245px;width:1272px;height:36px;background:#f7f7f7;border-top:1px solid #eaeaec;border-bottom:1px solid #e4e4e8"></div>
<div class="abs" style="left:282px;top:1245px;width:1px;height:36px;background:#eaeaec"></div>
<div class="abs" style="left:432px;top:1245px;width:1px;height:36px;background:#eaeaec"></div>
<div class="abs" style="left:732px;top:1245px;width:1px;height:36px;background:#eaeaec"></div>
<div class="abs" style="left:832px;top:1245px;width:1px;height:36px;background:#eaeaec"></div>
<div class="abs" style="left:982px;top:1245px;width:1px;height:36px;background:#eaeaec"></div>
<div class="abs" style="left:1132px;top:1245px;width:1px;height:36px;background:#eaeaec"></div>
<div class="abs" style="left:1292px;top:1245px;width:1px;height:36px;background:#eaeaec"></div>
<div class="abs" style="left:1374px;top:336px;width:12px;height:945px;background:linear-gradient(90deg,rgba(0,0,0,0),rgba(0,0,0,.07))"></div>
<div class="abs" style="left:1386px;top:336px;width:130px;height:945px;background:#fff;border-right:1px solid #eaeaec;overflow:hidden">
<div class="abs" style="left:0;top:0;width:130px;height:35px;background:#f8f8f8;border-bottom:1px solid #e6e6e8"></div>
<div class="abs" style="left:11px;top:0;height:35px;line-height:35px;font-size:12px;color:#999;white-space:nowrap"><svg width="10" height="10" viewBox="0 0 12 12" style="vertical-align:-1px"><circle cx='6' cy='6' r='5.2' fill='none' stroke='#888' stroke-width='1.1'/><path d='M6 3v3.2l2 1.3' fill='none' stroke='#888' stroke-width='1.1'/></svg></div>
<div class="abs" style="left:24.5px;top:0;height:35px;line-height:35px;font-size:12px;color:#444;white-space:nowrap">创建时间</div>
<div class="abs" style="left:106px;top:15px;width:0;height:0;border-left:4px solid transparent;border-right:4px solid transparent;border-top:4px solid #888"></div>
<div class="abs" style="left:0;top:35px;width:130px;height:874px;overflow:hidden">
<div class="abs" style="left:0;top:0px;width:130px;height:34px;background:#fff;border-bottom:1px solid #eaeaec"></div>
<div class="cell" style="left:10px;top:0px">2023-11-27 21:36:13</div>
<div class="abs" style="left:0;top:34px;width:130px;height:34px;background:#fafafa;border-bottom:1px solid #eaeaec"></div>
<div class="cell" style="left:10px;top:34px">2023-11-27 21:36:13</div>
<div class="abs" style="left:0;top:68px;width:130px;height:34px;background:#fff;border-bottom:1px solid #eaeaec"></div>
<div class="cell" style="left:10px;top:68px">2023-11-27 21:36:13</div>
<div class="abs" style="left:0;top:102px;width:130px;height:34px;background:#fafafa;border-bottom:1px solid #eaeaec"></div>
<div class="cell" style="left:10px;top:102px">2023-11-27 21:36:13</div>
<div class="abs" style="left:0;top:136px;width:130px;height:34px;background:#fff;border-bottom:1px solid #eaeaec"></div>
<div class="cell" style="left:10px;top:136px">2023-11-27 21:36:13</div>
<div class="abs" style="left:0;top:170px;width:130px;height:34px;background:#fafafa;border-bottom:1px solid #eaeaec"></div>
<div class="cell" style="left:10px;top:170px">2023-11-27 21:36:13</div>
<div class="abs" style="left:0;top:204px;width:130px;height:34px;background:#fff;border-bottom:1px solid #eaeaec"></div>
<div class="cell" style="left:10px;top:204px">2023-11-27 21:36:12</div>
<div class="abs" style="left:0;top:238px;width:130px;height:34px;background:#fafafa;border-bottom:1px solid #eaeaec"></div>
<div class="cell" style="left:10px;top:238px">2023-11-27 21:36:12</div>
<div class="abs" style="left:0;top:272px;width:130px;height:34px;background:#fff;border-bottom:1px solid #eaeaec"></div>
<div class="cell" style="left:10px;top:272px">2023-11-27 21:36:12</div>
<div class="abs" style="left:0;top:306px;width:130px;height:34px;background:#fafafa;border-bottom:1px solid #eaeaec"></div>
<div class="cell" style="left:10px;top:306px">2023-11-27 21:36:12</div>
<div class="abs" style="left:0;top:340px;width:130px;height:34px;background:#fff;border-bottom:1px solid #eaeaec"></div>
<div class="cell" style="left:10px;top:340px">2023-11-27 21:36:12</div>
<div class="abs" style="left:0;top:374px;width:130px;height:34px;background:#fafafa;border-bottom:1px solid #eaeaec"></div>
<div class="cell" style="left:10px;top:374px">2023-11-27 21:36:12</div>
<div class="abs" style="left:0;top:408px;width:130px;height:34px;background:#fff;border-bottom:1px solid #eaeaec"></div>
<div class="cell" style="left:10px;top:408px">2023-11-27 21:36:12</div>
<div class="abs" style="left:0;top:442px;width:130px;height:34px;background:#fafafa;border-bottom:1px solid #eaeaec"></div>
<div class="cell" style="left:10px;top:442px">2023-11-27 21:36:12</div>
<div class="abs" style="left:0;top:476px;width:130px;height:34px;background:#fff;border-bottom:1px solid #eaeaec"></div>
<div class="cell" style="left:10px;top:476px">2023-11-27 21:36:12</div>
<div class="abs" style="left:0;top:510px;width:130px;height:34px;background:#fafafa;border-bottom:1px solid #eaeaec"></div>
<div class="cell" style="left:10px;top:510px">2023-11-27 21:36:12</div>
<div class="abs" style="left:0;top:544px;width:130px;height:34px;background:#fff;border-bottom:1px solid #eaeaec"></div>
<div class="cell" style="left:10px;top:544px">2023-11-27 21:36:12</div>
<div class="abs" style="left:0;top:578px;width:130px;height:34px;background:#fafafa;border-bottom:1px solid #eaeaec"></div>
<div class="cell" style="left:10px;top:578px">2023-11-27 21:36:12</div>
<div class="abs" style="left:0;top:612px;width:130px;height:34px;background:#fff;border-bottom:1px solid #eaeaec"></div>
<div class="cell" style="left:10px;top:612px">2023-11-27 21:36:12</div>
<div class="abs" style="left:0;top:646px;width:130px;height:34px;background:#fafafa;border-bottom:1px solid #eaeaec"></div>
<div class="cell" style="left:10px;top:646px">2023-11-27 21:36:12</div>
<div class="abs" style="left:0;top:680px;width:130px;height:34px;background:#fff;border-bottom:1px solid #eaeaec"></div>
<div class="cell" style="left:10px;top:680px">2023-11-27 21:36:12</div>
<div class="abs" style="left:0;top:714px;width:130px;height:34px;background:#fafafa;border-bottom:1px solid #eaeaec"></div>
<div class="cell" style="left:10px;top:714px">2023-11-27 21:36:12</div>
<div class="abs" style="left:0;top:748px;width:130px;height:34px;background:#fff;border-bottom:1px solid #eaeaec"></div>
<div class="cell" style="left:10px;top:748px">2023-11-27 21:36:12</div>
<div class="abs" style="left:0;top:782px;width:130px;height:34px;background:#fafafa;border-bottom:1px solid #eaeaec"></div>
<div class="cell" style="left:10px;top:782px">2023-11-27 21:36:12</div>
<div class="abs" style="left:0;top:816px;width:130px;height:34px;background:#fff;border-bottom:1px solid #eaeaec"></div>
<div class="cell" style="left:10px;top:816px">2023-11-27 21:36:12</div>
<div class="abs" style="left:0;top:850px;width:130px;height:34px;background:#fafafa;border-bottom:1px solid #eaeaec"></div>
<div class="cell" style="left:10px;top:850px">2023-11-27 21:36:12</div>
</div>
<div class="abs" style="left:0;top:909px;width:130px;height:36px;background:#f7f7f7;border-top:1px solid #eaeaec;border-bottom:1px solid #e4e4e8"></div>
</div>
<div class="abs" style="left:1516px;top:371px;width:7px;height:450px;border-radius:4px;background:#b0b0b0"></div>
<div class="abs" style="left:244px;top:1282px;width:1279px;height:12px;background:#fff"></div>
<div class="abs" style="left:244px;top:1282px;width:774px;height:11px;border-radius:6px;background:#cfcfcf"></div>
</body></html>
